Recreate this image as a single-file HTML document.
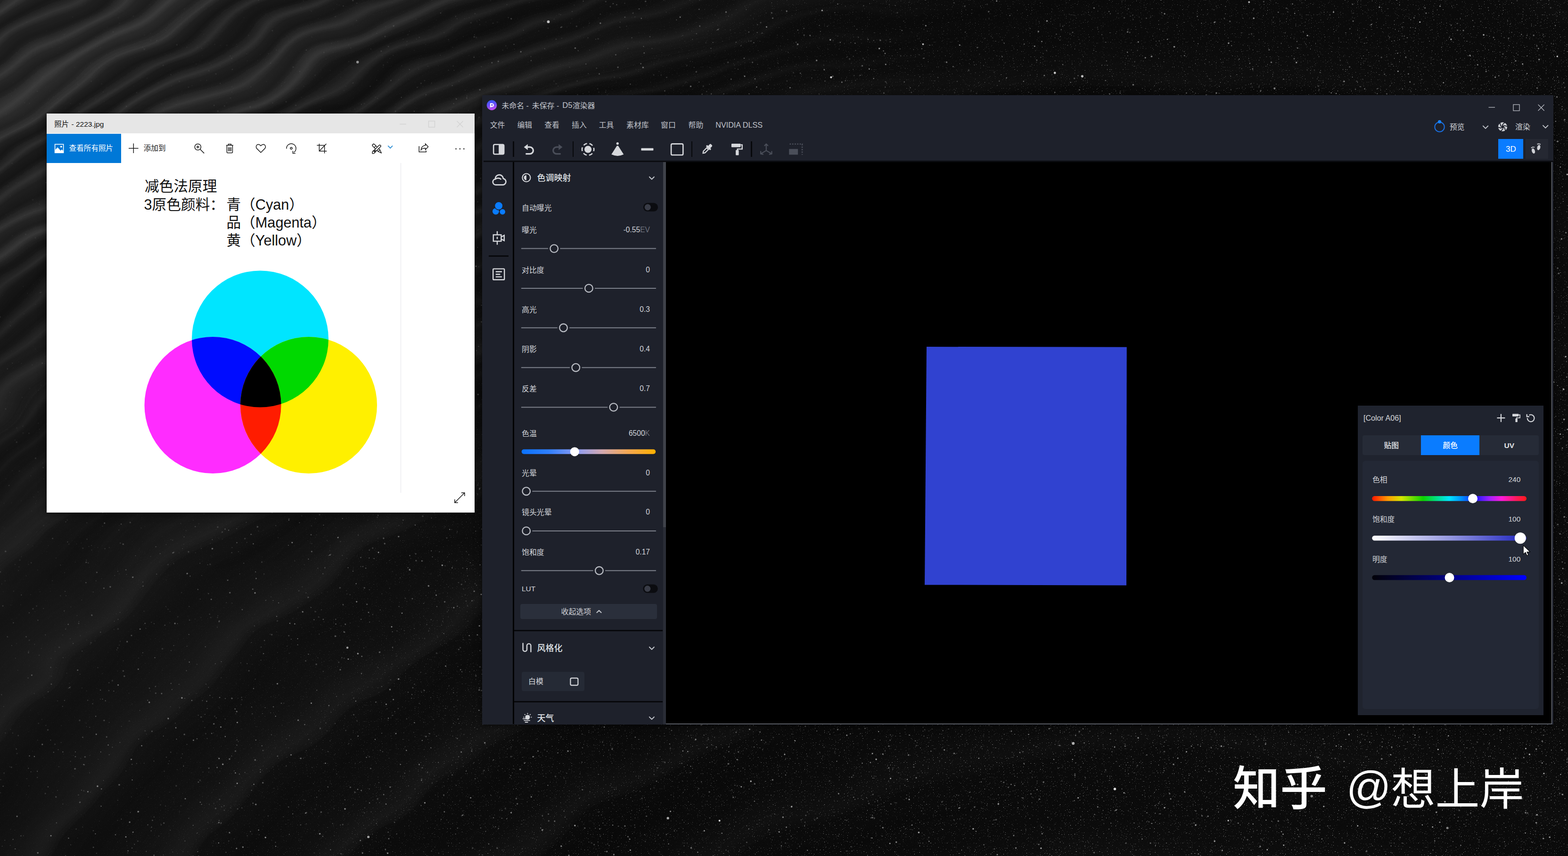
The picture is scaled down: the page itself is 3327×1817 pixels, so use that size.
<!DOCTYPE html><html><head><meta charset="utf-8"><title>D5</title><style>html,body{margin:0;padding:0;background:#111;overflow:hidden}body{width:3327px;height:1817px;position:relative;font-family:"Liberation Sans",sans-serif}#root{position:absolute;left:0;top:0;width:3327px;height:1817px;overflow:hidden}.a{position:absolute}.t{white-space:nowrap}.cj{font-family:"Liberation Sans","Noto Sans CJK SC",sans-serif}</style></head><body><div id="root">
<div class="a" style="left:0;top:0;width:3327px;height:1817px;background:radial-gradient(ellipse 1500px 950px at -100px 1350px, rgba(255,255,255,0.06), rgba(255,255,255,0) 100%),radial-gradient(ellipse 2300px 1500px at -100px 0px, #2c2c2c 0%, #222222 28%, #171717 50%, #0f0f0f 72%, #0a0a0a 100%)"></div>
<svg width="0" height="0" style="position:absolute"><filter id="wdisp" x="0" y="0" width="100%" height="100%"><feTurbulence type="fractalNoise" baseFrequency="0.0035 0.006" numOctaves="2" seed="8" result="n"/><feDisplacementMap in="SourceGraphic" in2="n" scale="80" xChannelSelector="R" yChannelSelector="G"/></filter></svg>
<div class="a" style="left:-180px;top:-180px;width:3687px;height:2177px;background:repeating-radial-gradient(circle at 2680px 3880px, rgba(255,255,255,0.045) 0px, rgba(255,255,255,0) 70px, rgba(0,0,0,0.28) 150px, rgba(0,0,0,0.1) 200px, rgba(255,255,255,0.045) 236px);-webkit-mask-image:linear-gradient(100deg, rgba(0,0,0,0.9) 0%, rgba(0,0,0,0.8) 35%, rgba(0,0,0,0.4) 60%, rgba(0,0,0,0.15) 100%);mask-image:linear-gradient(100deg, rgba(0,0,0,0.9) 0%, rgba(0,0,0,0.8) 35%, rgba(0,0,0,0.4) 60%, rgba(0,0,0,0.15) 100%);filter:url(#wdisp)"></div>
<div class="a" style="left:-180px;top:-180px;width:3687px;height:2177px;background:repeating-radial-gradient(circle at 2680px 3880px, rgba(255,255,255,0) 0px, rgba(255,255,255,0.085) 12px, rgba(255,255,255,0.02) 24px, rgba(0,0,0,0.26) 36px, rgba(0,0,0,0.1) 47px, rgba(255,255,255,0) 54px);-webkit-mask-image:radial-gradient(ellipse 2100px 1250px at 180px 180px, rgba(0,0,0,1) 0%, rgba(0,0,0,0.9) 40%, rgba(0,0,0,0.4) 70%, rgba(0,0,0,0) 100%);mask-image:radial-gradient(ellipse 2100px 1250px at 180px 180px, rgba(0,0,0,1) 0%, rgba(0,0,0,0.9) 40%, rgba(0,0,0,0.4) 70%, rgba(0,0,0,0) 100%);filter:url(#wdisp)"></div>
<svg class="a" style="left:0;top:0" width="3327" height="1817" viewBox="0 0 3327 1817">
<defs>
<filter id="grain" x="0" y="0" width="100%" height="100%"><feTurbulence type="fractalNoise" baseFrequency="0.85" numOctaves="2" seed="3"/><feColorMatrix type="matrix" values="0 0 0 0 1  0 0 0 0 1  0 0 0 0 1  1.6 0 0 0 -0.62"/></filter>
<filter id="glit" x="0" y="0" width="100%" height="100%"><feTurbulence type="fractalNoise" baseFrequency="0.55" numOctaves="1" seed="21"/><feColorMatrix type="matrix" values="0 0 0 0 1  0 0 0 0 1  0 0 0 0 1  14 0 0 0 -9.6"/></filter>
<pattern id="gl" width="500" height="500" patternUnits="userSpaceOnUse"><rect width="500" height="500" filter="url(#glit)"/></pattern>
<linearGradient id="gm" x1="0" y1="0.2" x2="1" y2="0.55"><stop offset="0" stop-color="#fff" stop-opacity="0"/><stop offset="0.3" stop-color="#fff" stop-opacity="0.12"/><stop offset="0.5" stop-color="#fff" stop-opacity="0.55"/><stop offset="0.8" stop-color="#fff" stop-opacity="0.9"/><stop offset="1" stop-color="#fff" stop-opacity="1"/></linearGradient>
<mask id="gmk"><rect width="3327" height="1817" fill="url(#gm)"/></mask>
<pattern id="gp" width="400" height="400" patternUnits="userSpaceOnUse"><rect width="400" height="400" filter="url(#grain)"/></pattern>
<linearGradient id="dm" x1="0" y1="0" x2="1" y2="0.45"><stop offset="0" stop-color="#fff" stop-opacity="0.03"/><stop offset="0.22" stop-color="#fff" stop-opacity="0.18"/><stop offset="0.42" stop-color="#fff" stop-opacity="0.7"/><stop offset="1" stop-color="#fff" stop-opacity="1"/></linearGradient>
<mask id="sm"><rect width="3327" height="1817" fill="url(#dm)"/></mask>

<pattern id="sp" width="620" height="620" patternUnits="userSpaceOnUse" patternTransform="rotate(-27)">
<circle cx="280.5" cy="347.1" r="1.1" fill="#fff" opacity="0.52"/>
<circle cx="530.1" cy="117.7" r="1.3" fill="#fff" opacity="0.53"/>
<circle cx="380.7" cy="115.4" r="1.1" fill="#fff" opacity="0.41"/>
<circle cx="56.2" cy="502" r="0.55" fill="#fff" opacity="0.62"/>
<circle cx="245.6" cy="280.9" r="1.6" fill="#fff" opacity="0.66"/>
<circle cx="386.3" cy="515.7" r="0.6" fill="#fff" opacity="0.24"/>
<circle cx="117.9" cy="150" r="0.55" fill="#fff" opacity="0.74"/>
<circle cx="202.3" cy="366.4" r="0.7" fill="#fff" opacity="0.56"/>
<circle cx="397" cy="309.9" r="0.6" fill="#fff" opacity="0.52"/>
<circle cx="172.5" cy="618.5" r="0.6" fill="#fff" opacity="0.70"/>
<circle cx="195.5" cy="142.4" r="0.8" fill="#fff" opacity="0.22"/>
<circle cx="349.1" cy="66.9" r="0.6" fill="#fff" opacity="0.79"/>
<circle cx="239.6" cy="594" r="0.55" fill="#fff" opacity="0.35"/>
<circle cx="574.8" cy="32.4" r="1.0" fill="#fff" opacity="0.89"/>
<circle cx="246.4" cy="45.3" r="0.7" fill="#fff" opacity="0.74"/>
<circle cx="167.3" cy="54" r="0.9" fill="#fff" opacity="0.21"/>
<circle cx="254.2" cy="572.2" r="0.7" fill="#fff" opacity="0.37"/>
<circle cx="62.6" cy="37.1" r="1.1" fill="#fff" opacity="0.32"/>
<circle cx="346.8" cy="277.4" r="0.7" fill="#fff" opacity="0.89"/>
<circle cx="477.1" cy="259.9" r="1.0" fill="#fff" opacity="0.28"/>
<circle cx="260.9" cy="132" r="0.8" fill="#fff" opacity="0.81"/>
<circle cx="604.4" cy="367.5" r="0.55" fill="#fff" opacity="0.35"/>
<circle cx="244.5" cy="529.7" r="1.6" fill="#fff" opacity="0.27"/>
<circle cx="613.4" cy="132.2" r="0.8" fill="#fff" opacity="0.21"/>
<circle cx="378.4" cy="514.8" r="1.0" fill="#fff" opacity="0.25"/>
<circle cx="55.9" cy="361.3" r="0.7" fill="#fff" opacity="0.21"/>
<circle cx="228.6" cy="385.7" r="0.7" fill="#fff" opacity="0.87"/>
<circle cx="299.9" cy="356.2" r="1.0" fill="#fff" opacity="0.33"/>
<circle cx="95.6" cy="563.2" r="1.6" fill="#fff" opacity="0.37"/>
<circle cx="117.7" cy="458.4" r="1.3" fill="#fff" opacity="0.34"/>
<circle cx="589.1" cy="547" r="1.6" fill="#fff" opacity="0.25"/>
<circle cx="29.4" cy="67.6" r="1.3" fill="#fff" opacity="0.87"/>
<circle cx="147.8" cy="436.8" r="0.8" fill="#fff" opacity="0.49"/>
<circle cx="561" cy="304.4" r="1.3" fill="#fff" opacity="0.32"/>
<circle cx="446.6" cy="42.6" r="0.7" fill="#fff" opacity="0.54"/>
<circle cx="405.2" cy="381.8" r="0.6" fill="#fff" opacity="0.40"/>
<circle cx="568.8" cy="126.5" r="0.55" fill="#fff" opacity="0.25"/>
<circle cx="255.1" cy="154.4" r="0.55" fill="#fff" opacity="0.32"/>
<circle cx="228.6" cy="354.7" r="0.7" fill="#fff" opacity="0.26"/>
<circle cx="85.8" cy="279.2" r="0.9" fill="#fff" opacity="0.66"/>
<circle cx="428.6" cy="362.4" r="0.7" fill="#fff" opacity="0.61"/>
<circle cx="572.6" cy="294.4" r="0.9" fill="#fff" opacity="0.69"/>
<circle cx="596.9" cy="13.2" r="0.6" fill="#fff" opacity="0.54"/>
<circle cx="452.9" cy="197.7" r="0.6" fill="#fff" opacity="0.25"/>
<circle cx="338.6" cy="456.9" r="0.7" fill="#fff" opacity="0.76"/>
<circle cx="567.3" cy="218.1" r="1.1" fill="#fff" opacity="0.83"/>
<circle cx="540.1" cy="258.6" r="0.55" fill="#fff" opacity="0.80"/>
<circle cx="355.1" cy="387.5" r="1.0" fill="#fff" opacity="0.47"/>
<circle cx="7.7" cy="44.8" r="0.6" fill="#fff" opacity="0.65"/>
<circle cx="615.9" cy="545.5" r="0.9" fill="#fff" opacity="0.47"/>
<circle cx="455.7" cy="360.2" r="1.1" fill="#fff" opacity="0.52"/>
<circle cx="335.6" cy="321.6" r="1.3" fill="#fff" opacity="0.22"/>
<circle cx="372.8" cy="298.2" r="0.7" fill="#fff" opacity="0.87"/>
<circle cx="70" cy="483.6" r="1.1" fill="#fff" opacity="0.38"/>
<circle cx="7" cy="186.6" r="1.6" fill="#fff" opacity="0.34"/>
<circle cx="105.2" cy="561.5" r="1.1" fill="#fff" opacity="0.55"/>
<circle cx="149.7" cy="250.9" r="0.8" fill="#fff" opacity="0.34"/>
<circle cx="267.2" cy="499.7" r="0.7" fill="#fff" opacity="0.82"/>
<circle cx="238.3" cy="361.5" r="0.9" fill="#fff" opacity="0.35"/>
<circle cx="83.4" cy="217.5" r="0.55" fill="#fff" opacity="0.70"/>
<circle cx="589" cy="171.6" r="0.7" fill="#fff" opacity="0.28"/>
<circle cx="292.2" cy="574" r="1.0" fill="#fff" opacity="0.47"/>
<circle cx="322.4" cy="416.7" r="1.6" fill="#fff" opacity="0.52"/>
<circle cx="46.3" cy="19.5" r="1.6" fill="#fff" opacity="0.23"/>
<circle cx="439.4" cy="353.8" r="0.8" fill="#fff" opacity="0.65"/>
<circle cx="349.7" cy="397.4" r="1.0" fill="#fff" opacity="0.52"/>
<circle cx="15.3" cy="514.4" r="0.7" fill="#fff" opacity="0.75"/>
<circle cx="494" cy="610.1" r="0.6" fill="#fff" opacity="0.51"/>
<circle cx="390.6" cy="406.1" r="0.9" fill="#fff" opacity="0.87"/>
<circle cx="424.4" cy="123.6" r="1.1" fill="#fff" opacity="0.38"/>
<circle cx="442.8" cy="468.1" r="1.3" fill="#fff" opacity="0.70"/>
<circle cx="111" cy="168.9" r="0.9" fill="#fff" opacity="0.58"/>
<circle cx="587" cy="310.3" r="0.7" fill="#fff" opacity="0.48"/>
<circle cx="491" cy="561.9" r="0.6" fill="#fff" opacity="0.49"/>
<circle cx="553.4" cy="240.5" r="1.1" fill="#fff" opacity="0.52"/>
<circle cx="387.8" cy="564.2" r="1.0" fill="#fff" opacity="0.59"/>
<circle cx="404.7" cy="311.6" r="0.9" fill="#fff" opacity="0.52"/>
<circle cx="403.8" cy="127" r="0.6" fill="#fff" opacity="0.35"/>
<circle cx="558" cy="607.9" r="0.8" fill="#fff" opacity="0.58"/>
<circle cx="490.3" cy="198.6" r="0.55" fill="#fff" opacity="0.44"/>
<circle cx="51.3" cy="273.4" r="1.3" fill="#fff" opacity="0.49"/>
<circle cx="170.7" cy="570.3" r="0.7" fill="#fff" opacity="0.77"/>
<circle cx="39.7" cy="495.9" r="0.7" fill="#fff" opacity="0.57"/>
<circle cx="425.7" cy="567.9" r="1.1" fill="#fff" opacity="0.30"/>
<circle cx="320.2" cy="448.6" r="1.1" fill="#fff" opacity="0.86"/>
<circle cx="305.4" cy="588.5" r="0.6" fill="#fff" opacity="0.73"/>
<circle cx="272.4" cy="346.4" r="1.3" fill="#fff" opacity="0.65"/>
<circle cx="324.1" cy="523" r="1.3" fill="#fff" opacity="0.38"/>
<circle cx="416.2" cy="592" r="1.6" fill="#fff" opacity="0.35"/>
<circle cx="527.5" cy="600.4" r="1.3" fill="#fff" opacity="0.39"/>
<circle cx="308.5" cy="254.9" r="0.6" fill="#fff" opacity="0.55"/>
<circle cx="375.2" cy="17.2" r="0.55" fill="#fff" opacity="0.56"/>
<circle cx="248.4" cy="496.7" r="1.6" fill="#fff" opacity="0.29"/>
<circle cx="57.8" cy="103.4" r="1.3" fill="#fff" opacity="0.52"/>
<circle cx="570.9" cy="496.2" r="1.0" fill="#fff" opacity="0.39"/>
<circle cx="293.4" cy="78.7" r="1.0" fill="#fff" opacity="0.83"/>
<circle cx="580.1" cy="570.4" r="1.3" fill="#fff" opacity="0.42"/>
<circle cx="118.7" cy="383.1" r="0.8" fill="#fff" opacity="0.29"/>
<circle cx="483.2" cy="14.1" r="0.7" fill="#fff" opacity="0.31"/>
<circle cx="7.3" cy="176.1" r="0.9" fill="#fff" opacity="0.37"/>
<circle cx="309.3" cy="309.8" r="1.6" fill="#fff" opacity="0.29"/>
<circle cx="316.5" cy="155.3" r="0.7" fill="#fff" opacity="0.69"/>
<circle cx="544.8" cy="14.4" r="1.0" fill="#fff" opacity="0.78"/>
<circle cx="381.8" cy="333.7" r="1.3" fill="#fff" opacity="0.65"/>
<circle cx="328.4" cy="527.8" r="1.6" fill="#fff" opacity="0.61"/>
<circle cx="84.6" cy="567.2" r="0.9" fill="#fff" opacity="0.83"/>
<circle cx="195.8" cy="195.3" r="0.7" fill="#fff" opacity="0.35"/>
<circle cx="619" cy="550.3" r="0.7" fill="#fff" opacity="0.82"/>
<circle cx="82.2" cy="54.6" r="1.0" fill="#fff" opacity="0.27"/>
<circle cx="515.9" cy="261.4" r="0.7" fill="#fff" opacity="0.34"/>
<circle cx="389.4" cy="495.3" r="0.6" fill="#fff" opacity="0.34"/>
<circle cx="423.1" cy="565.1" r="0.9" fill="#fff" opacity="0.28"/>
<circle cx="313.5" cy="470.1" r="1.3" fill="#fff" opacity="0.90"/>
<circle cx="516.4" cy="497.8" r="1.1" fill="#fff" opacity="0.27"/>
<circle cx="23.2" cy="342" r="1.3" fill="#fff" opacity="0.83"/>
<circle cx="298.4" cy="117.5" r="0.6" fill="#fff" opacity="0.34"/>
<circle cx="520.9" cy="614" r="0.6" fill="#fff" opacity="0.61"/>
<circle cx="83.4" cy="422.2" r="0.6" fill="#fff" opacity="0.74"/>
<circle cx="202.6" cy="289.5" r="1.3" fill="#fff" opacity="0.45"/>
<circle cx="130.3" cy="231.4" r="0.55" fill="#fff" opacity="0.79"/>
<circle cx="112.4" cy="281.4" r="0.9" fill="#fff" opacity="0.48"/>
<circle cx="121" cy="102.3" r="1.3" fill="#fff" opacity="0.75"/>
<circle cx="200.7" cy="52.6" r="1.0" fill="#fff" opacity="0.60"/>
<circle cx="118.4" cy="362.5" r="0.9" fill="#fff" opacity="0.76"/>
<circle cx="160.1" cy="565" r="0.7" fill="#fff" opacity="0.77"/>
<circle cx="251.5" cy="555.9" r="1.3" fill="#fff" opacity="0.69"/>
<circle cx="475.7" cy="474.4" r="1.0" fill="#fff" opacity="0.34"/>
<circle cx="114.6" cy="494.3" r="0.8" fill="#fff" opacity="0.53"/>
<circle cx="6.6" cy="220.5" r="1.6" fill="#fff" opacity="0.23"/>
<circle cx="169.2" cy="596.1" r="0.8" fill="#fff" opacity="0.44"/>
<circle cx="409.1" cy="353.1" r="1.3" fill="#fff" opacity="0.25"/>
<circle cx="319.1" cy="308.5" r="0.7" fill="#fff" opacity="0.69"/>
<circle cx="472.3" cy="607.7" r="0.55" fill="#fff" opacity="0.28"/>
<circle cx="67" cy="147" r="1.1" fill="#fff" opacity="0.48"/>
<circle cx="31.3" cy="121.2" r="1.0" fill="#fff" opacity="0.21"/>
<circle cx="160.3" cy="170.9" r="0.9" fill="#fff" opacity="0.59"/>
<circle cx="314.8" cy="599.6" r="1.6" fill="#fff" opacity="0.79"/>
<circle cx="61.8" cy="275.5" r="0.6" fill="#fff" opacity="0.58"/>
<circle cx="414.4" cy="592.3" r="1.0" fill="#fff" opacity="0.85"/>
<circle cx="99.2" cy="292.5" r="0.7" fill="#fff" opacity="0.80"/>
<circle cx="336" cy="369.9" r="1.0" fill="#fff" opacity="0.86"/>
<circle cx="260.8" cy="326.6" r="1.6" fill="#fff" opacity="0.42"/>
<circle cx="328.9" cy="299.6" r="0.8" fill="#fff" opacity="0.59"/>
<circle cx="175.8" cy="444.3" r="0.8" fill="#fff" opacity="0.22"/>
<circle cx="478.9" cy="363.2" r="0.7" fill="#fff" opacity="0.49"/>
<circle cx="424.3" cy="32.7" r="0.9" fill="#fff" opacity="0.72"/>
<circle cx="31.1" cy="613" r="0.9" fill="#fff" opacity="0.25"/>
<circle cx="561.4" cy="266.3" r="1.1" fill="#fff" opacity="0.38"/>
<circle cx="468.4" cy="28.2" r="0.6" fill="#fff" opacity="0.86"/>
<circle cx="448.1" cy="290.4" r="0.7" fill="#fff" opacity="0.62"/>
<circle cx="71.4" cy="387" r="1.1" fill="#fff" opacity="0.28"/>
<circle cx="533.9" cy="221.2" r="0.7" fill="#fff" opacity="0.29"/>
<circle cx="274.6" cy="414.1" r="1.1" fill="#fff" opacity="0.62"/>
<circle cx="396.5" cy="422.8" r="0.9" fill="#fff" opacity="0.74"/>
<circle cx="329.1" cy="618.5" r="0.8" fill="#fff" opacity="0.71"/>
<circle cx="147.8" cy="70.6" r="0.8" fill="#fff" opacity="0.75"/>
<circle cx="387.5" cy="222.7" r="0.8" fill="#fff" opacity="0.63"/>
<circle cx="449.5" cy="433.4" r="0.7" fill="#fff" opacity="0.64"/>
<circle cx="467.1" cy="117.7" r="0.7" fill="#fff" opacity="0.55"/>
<circle cx="404.8" cy="121.5" r="0.55" fill="#fff" opacity="0.64"/>
<circle cx="5.9" cy="160.9" r="0.55" fill="#fff" opacity="0.64"/>
<circle cx="63.5" cy="335.8" r="0.6" fill="#fff" opacity="0.73"/>
<circle cx="566" cy="99.7" r="0.7" fill="#fff" opacity="0.64"/>
<circle cx="231.4" cy="296.7" r="0.7" fill="#fff" opacity="0.44"/>
<circle cx="306.5" cy="82.7" r="0.6" fill="#fff" opacity="0.76"/>
<circle cx="277.3" cy="509.7" r="0.7" fill="#fff" opacity="0.51"/>
<circle cx="463.3" cy="241.9" r="0.7" fill="#fff" opacity="0.46"/>
<circle cx="405.3" cy="613.3" r="0.9" fill="#fff" opacity="0.40"/>
<circle cx="470.6" cy="512.2" r="0.7" fill="#fff" opacity="0.50"/>
<circle cx="228.9" cy="60.2" r="0.9" fill="#fff" opacity="0.25"/>
<circle cx="51.5" cy="349.8" r="1.1" fill="#fff" opacity="0.77"/>
<circle cx="287.4" cy="510.6" r="0.55" fill="#fff" opacity="0.25"/>
<circle cx="132.2" cy="410.5" r="0.6" fill="#fff" opacity="0.69"/>
<circle cx="306.8" cy="473.8" r="0.9" fill="#fff" opacity="0.40"/>
<circle cx="88.6" cy="221.8" r="0.9" fill="#fff" opacity="0.46"/>
<circle cx="72.8" cy="439.8" r="1.6" fill="#fff" opacity="0.62"/>
<circle cx="559.5" cy="426" r="0.8" fill="#fff" opacity="0.51"/>
<circle cx="497.9" cy="189" r="0.9" fill="#fff" opacity="0.35"/>
<circle cx="600" cy="452.5" r="1.3" fill="#fff" opacity="0.37"/>
<circle cx="224.3" cy="226.6" r="0.9" fill="#fff" opacity="0.67"/>
<circle cx="362.6" cy="493.6" r="1.6" fill="#fff" opacity="0.46"/>
<circle cx="242" cy="96" r="1.6" fill="#fff" opacity="0.59"/>
<circle cx="109.5" cy="470.5" r="0.8" fill="#fff" opacity="0.77"/>
<circle cx="137.2" cy="35.8" r="0.7" fill="#fff" opacity="0.60"/>
<circle cx="599.2" cy="403.7" r="1.0" fill="#fff" opacity="0.24"/>
<circle cx="339" cy="488.6" r="0.6" fill="#fff" opacity="0.43"/>
<circle cx="169.7" cy="65.4" r="0.9" fill="#fff" opacity="0.26"/>
<circle cx="393.2" cy="89.2" r="1.0" fill="#fff" opacity="0.37"/>
<circle cx="136.7" cy="474.5" r="1.3" fill="#fff" opacity="0.44"/>
<circle cx="284.6" cy="217.3" r="0.9" fill="#fff" opacity="0.67"/>
<circle cx="306.1" cy="333.2" r="0.6" fill="#fff" opacity="0.70"/>
<circle cx="567.3" cy="254.6" r="0.9" fill="#fff" opacity="0.80"/>
<circle cx="499.7" cy="517" r="1.1" fill="#fff" opacity="0.87"/>
<circle cx="397" cy="324.8" r="0.55" fill="#fff" opacity="0.76"/>
<circle cx="261.4" cy="260.7" r="0.7" fill="#fff" opacity="0.37"/>
<circle cx="100.6" cy="393.8" r="0.7" fill="#fff" opacity="0.42"/>
<circle cx="241.4" cy="328" r="0.8" fill="#fff" opacity="0.88"/>
<circle cx="36.7" cy="191.2" r="0.6" fill="#fff" opacity="0.41"/>
<circle cx="96.4" cy="570.2" r="0.55" fill="#fff" opacity="0.73"/>
<circle cx="10.6" cy="298.3" r="0.55" fill="#fff" opacity="0.42"/>
<circle cx="122.5" cy="222.8" r="1.6" fill="#fff" opacity="0.36"/>
<circle cx="444.7" cy="368.8" r="0.7" fill="#fff" opacity="0.51"/>
<circle cx="554.6" cy="249.5" r="0.8" fill="#fff" opacity="0.64"/>
<circle cx="584" cy="341.3" r="0.8" fill="#fff" opacity="0.54"/>
<circle cx="249.6" cy="592.5" r="1.3" fill="#fff" opacity="0.74"/>
<circle cx="57.3" cy="534.8" r="1.0" fill="#fff" opacity="0.23"/>
<circle cx="587.5" cy="496.9" r="1.0" fill="#fff" opacity="0.88"/>
<circle cx="492.7" cy="480" r="0.55" fill="#fff" opacity="0.66"/>
<circle cx="147.3" cy="6.7" r="1.1" fill="#fff" opacity="0.83"/>
<circle cx="279" cy="152.9" r="1.0" fill="#fff" opacity="0.62"/>
<circle cx="97.5" cy="97.3" r="0.9" fill="#fff" opacity="0.30"/>
<circle cx="563" cy="502.2" r="0.7" fill="#fff" opacity="0.65"/>
<circle cx="615.7" cy="165.2" r="1.3" fill="#fff" opacity="0.24"/>
<circle cx="354.6" cy="110.5" r="0.7" fill="#fff" opacity="0.77"/>
<circle cx="524.6" cy="509.7" r="0.6" fill="#fff" opacity="0.45"/>
<circle cx="381.2" cy="327.3" r="1.1" fill="#fff" opacity="0.69"/>
<circle cx="51.4" cy="464.1" r="1.3" fill="#fff" opacity="0.80"/>
<circle cx="188.2" cy="489.4" r="1.0" fill="#fff" opacity="0.34"/>
<circle cx="423" cy="484.5" r="1.1" fill="#fff" opacity="0.35"/>
<circle cx="336.9" cy="325.9" r="0.7" fill="#fff" opacity="0.86"/>
<circle cx="597.6" cy="196" r="1.0" fill="#fff" opacity="0.25"/>
<circle cx="189.5" cy="289.7" r="0.6" fill="#fff" opacity="0.45"/>
<circle cx="426" cy="65.6" r="1.0" fill="#fff" opacity="0.67"/>
<circle cx="462.9" cy="486.3" r="0.6" fill="#fff" opacity="0.66"/>
<circle cx="7.7" cy="233.8" r="1.1" fill="#fff" opacity="0.37"/>
<circle cx="349.8" cy="284" r="0.55" fill="#fff" opacity="0.80"/>
<circle cx="523.6" cy="445.9" r="1.6" fill="#fff" opacity="0.31"/>
<circle cx="389.2" cy="581.2" r="0.8" fill="#fff" opacity="0.87"/>
<circle cx="468.1" cy="344.5" r="0.6" fill="#fff" opacity="0.38"/>
<circle cx="124" cy="453.5" r="0.9" fill="#fff" opacity="0.42"/>
<circle cx="169.8" cy="291.3" r="0.9" fill="#fff" opacity="0.51"/>
<circle cx="237.1" cy="63.2" r="1.6" fill="#fff" opacity="0.27"/>
<circle cx="420.2" cy="439.1" r="0.7" fill="#fff" opacity="0.34"/>
<circle cx="22.6" cy="287.2" r="0.6" fill="#fff" opacity="0.27"/>
<circle cx="20.1" cy="612.2" r="1.0" fill="#fff" opacity="0.48"/>
<circle cx="45.1" cy="570.8" r="1.0" fill="#fff" opacity="0.85"/>
<circle cx="86.2" cy="127.4" r="0.7" fill="#fff" opacity="0.77"/>
<circle cx="239.3" cy="205.5" r="1.0" fill="#fff" opacity="0.64"/>
<circle cx="450.7" cy="380.1" r="0.9" fill="#fff" opacity="0.89"/>
<circle cx="489.6" cy="409.3" r="1.6" fill="#fff" opacity="0.57"/>
<circle cx="161.6" cy="117" r="0.8" fill="#fff" opacity="0.66"/>
<circle cx="65.9" cy="234.1" r="1.3" fill="#fff" opacity="0.43"/>
<circle cx="182" cy="63.7" r="0.7" fill="#fff" opacity="0.38"/>
<circle cx="334.1" cy="185.1" r="0.7" fill="#fff" opacity="0.45"/>
<circle cx="310.3" cy="87.9" r="0.7" fill="#fff" opacity="0.89"/>
<circle cx="319.9" cy="443.5" r="0.7" fill="#fff" opacity="0.60"/>
<circle cx="16.6" cy="408.9" r="0.6" fill="#fff" opacity="0.30"/>
<circle cx="296.3" cy="258.8" r="0.9" fill="#fff" opacity="0.43"/>
<circle cx="576" cy="223.9" r="1.1" fill="#fff" opacity="0.82"/>
<circle cx="280.4" cy="452.5" r="0.7" fill="#fff" opacity="0.83"/>
<circle cx="336.9" cy="347.7" r="1.3" fill="#fff" opacity="0.84"/>
<circle cx="104.5" cy="462.3" r="0.9" fill="#fff" opacity="0.62"/>
<circle cx="76" cy="511.3" r="0.8" fill="#fff" opacity="0.68"/>
<circle cx="225.5" cy="470.2" r="0.9" fill="#fff" opacity="0.78"/>
<circle cx="115.1" cy="339.7" r="0.6" fill="#fff" opacity="0.52"/>
<circle cx="250.1" cy="485.3" r="0.7" fill="#fff" opacity="0.42"/>
<circle cx="416.2" cy="457.4" r="1.0" fill="#fff" opacity="0.63"/>
<circle cx="397" cy="473.3" r="0.7" fill="#fff" opacity="0.34"/>
<circle cx="290.2" cy="88.7" r="1.0" fill="#fff" opacity="0.28"/>
<circle cx="251.6" cy="208.5" r="0.7" fill="#fff" opacity="0.38"/>
<circle cx="352.2" cy="205.9" r="0.55" fill="#fff" opacity="0.71"/>
<circle cx="488.3" cy="250" r="1.1" fill="#fff" opacity="0.62"/>
<circle cx="291.3" cy="255.1" r="1.6" fill="#fff" opacity="0.84"/>
<circle cx="350.2" cy="252.3" r="0.8" fill="#fff" opacity="0.54"/>
<circle cx="616.7" cy="519.7" r="1.0" fill="#fff" opacity="0.78"/>
<circle cx="72.8" cy="71.1" r="1.3" fill="#fff" opacity="0.43"/>
<circle cx="322.8" cy="260.6" r="0.55" fill="#fff" opacity="0.42"/>
<circle cx="33.9" cy="449.9" r="1.0" fill="#fff" opacity="0.71"/>
<circle cx="370.5" cy="466.2" r="0.8" fill="#fff" opacity="0.82"/>
<circle cx="543.8" cy="151.5" r="1.1" fill="#fff" opacity="0.37"/>
<circle cx="541.3" cy="603" r="1.1" fill="#fff" opacity="0.69"/>
<circle cx="326.3" cy="148.3" r="0.8" fill="#fff" opacity="0.66"/>
<circle cx="582.9" cy="545.4" r="0.9" fill="#fff" opacity="0.81"/>
<circle cx="261.3" cy="499.3" r="0.7" fill="#fff" opacity="0.65"/>
<circle cx="261.4" cy="76.1" r="0.6" fill="#fff" opacity="0.27"/>
<circle cx="491.3" cy="76.8" r="1.3" fill="#fff" opacity="0.60"/>
<circle cx="281" cy="183.6" r="0.8" fill="#fff" opacity="0.22"/>
<circle cx="106.6" cy="273.3" r="1.1" fill="#fff" opacity="0.77"/>
<circle cx="246.3" cy="221" r="1.6" fill="#fff" opacity="0.36"/>
<circle cx="189.9" cy="282" r="0.9" fill="#fff" opacity="0.42"/>
<circle cx="309" cy="579" r="1.1" fill="#fff" opacity="0.82"/>
<circle cx="125.7" cy="532.6" r="0.55" fill="#fff" opacity="0.34"/>
<circle cx="519.5" cy="219.6" r="1.1" fill="#fff" opacity="0.21"/>
<circle cx="393.9" cy="432.7" r="1.3" fill="#fff" opacity="0.34"/>
<circle cx="392.1" cy="118.7" r="0.55" fill="#fff" opacity="0.66"/>
<circle cx="189.8" cy="507" r="0.8" fill="#fff" opacity="0.81"/>
<circle cx="442.1" cy="83.6" r="1.1" fill="#fff" opacity="0.49"/>
<circle cx="105" cy="534.2" r="0.6" fill="#fff" opacity="0.70"/>
<circle cx="121.8" cy="112.2" r="0.7" fill="#fff" opacity="0.55"/>
<circle cx="183.2" cy="169.4" r="1.3" fill="#fff" opacity="0.82"/>
<circle cx="365.7" cy="142" r="0.8" fill="#fff" opacity="0.83"/>
<circle cx="111.9" cy="140.1" r="0.7" fill="#fff" opacity="0.65"/>
<circle cx="55.8" cy="609.5" r="1.1" fill="#fff" opacity="0.84"/>
<circle cx="45.8" cy="562.6" r="0.55" fill="#fff" opacity="0.62"/>
<circle cx="176.4" cy="155.6" r="1.6" fill="#fff" opacity="0.26"/>
<circle cx="176.8" cy="468.5" r="0.7" fill="#fff" opacity="0.33"/>
<circle cx="455.2" cy="17.9" r="0.7" fill="#fff" opacity="0.89"/>
<circle cx="20.8" cy="286.2" r="1.6" fill="#fff" opacity="0.47"/>
<circle cx="576.1" cy="309.9" r="0.7" fill="#fff" opacity="0.24"/>
<circle cx="481.6" cy="564" r="0.9" fill="#fff" opacity="0.66"/>
<circle cx="485.5" cy="320.4" r="1.3" fill="#fff" opacity="0.78"/>
<circle cx="393.5" cy="609.7" r="1.3" fill="#fff" opacity="0.32"/>
<circle cx="483.4" cy="102.4" r="1.6" fill="#fff" opacity="0.50"/>
<circle cx="414.4" cy="339.6" r="0.8" fill="#fff" opacity="0.75"/>
<circle cx="490.5" cy="146.3" r="1.1" fill="#fff" opacity="0.58"/>
<circle cx="528.6" cy="374" r="0.8" fill="#fff" opacity="0.22"/>
<circle cx="370" cy="443.1" r="1.6" fill="#fff" opacity="0.51"/>
<circle cx="546" cy="201.5" r="1.6" fill="#fff" opacity="0.21"/>
<circle cx="307.6" cy="269.5" r="1.1" fill="#fff" opacity="0.71"/>
<circle cx="531.1" cy="19.2" r="0.6" fill="#fff" opacity="0.84"/>
<circle cx="352.7" cy="336.8" r="0.7" fill="#fff" opacity="0.64"/>
<circle cx="33.5" cy="263.7" r="0.9" fill="#fff" opacity="0.77"/>
<circle cx="457.8" cy="484" r="1.6" fill="#fff" opacity="0.55"/>
<circle cx="403" cy="316.5" r="1.0" fill="#fff" opacity="0.38"/>
<circle cx="99.1" cy="428.2" r="1.6" fill="#fff" opacity="0.75"/>
<circle cx="37.9" cy="254.6" r="0.9" fill="#fff" opacity="0.69"/>
<circle cx="436.3" cy="593.5" r="0.7" fill="#fff" opacity="0.54"/>
<circle cx="472" cy="611.4" r="0.7" fill="#fff" opacity="0.72"/>
<circle cx="323.4" cy="611.1" r="0.55" fill="#fff" opacity="0.37"/>
<circle cx="551.9" cy="87.8" r="1.0" fill="#fff" opacity="0.59"/>
<circle cx="292.6" cy="580.1" r="0.55" fill="#fff" opacity="0.68"/>
<circle cx="444.6" cy="605.2" r="1.6" fill="#fff" opacity="0.36"/>
<circle cx="157" cy="342.2" r="0.7" fill="#fff" opacity="0.49"/>
<circle cx="53.3" cy="140.9" r="0.8" fill="#fff" opacity="0.44"/>
<circle cx="608.4" cy="378.8" r="0.55" fill="#fff" opacity="0.31"/>
<circle cx="362.8" cy="616.7" r="0.9" fill="#fff" opacity="0.60"/>
<circle cx="565.4" cy="548.3" r="0.7" fill="#fff" opacity="0.52"/>
<circle cx="243.6" cy="522.7" r="1.0" fill="#fff" opacity="0.47"/>
<circle cx="30.5" cy="259.4" r="0.7" fill="#fff" opacity="0.33"/>
<circle cx="340.7" cy="101.6" r="0.7" fill="#fff" opacity="0.48"/>
<circle cx="368.2" cy="471" r="1.1" fill="#fff" opacity="0.51"/>
<circle cx="615.9" cy="421.1" r="1.1" fill="#fff" opacity="0.34"/>
<circle cx="237.4" cy="45.1" r="0.8" fill="#fff" opacity="0.45"/>
<circle cx="170.2" cy="11.5" r="0.7" fill="#fff" opacity="0.72"/>
<circle cx="317.5" cy="351.8" r="0.7" fill="#fff" opacity="0.39"/>
<circle cx="223.9" cy="95.2" r="0.9" fill="#fff" opacity="0.30"/>
<circle cx="149.3" cy="520.4" r="0.6" fill="#fff" opacity="0.21"/>
<circle cx="199.7" cy="238.3" r="0.6" fill="#fff" opacity="0.80"/>
<circle cx="236.5" cy="158.9" r="1.3" fill="#fff" opacity="0.67"/>
<circle cx="187.4" cy="376.9" r="1.1" fill="#fff" opacity="0.23"/>
<circle cx="93.5" cy="369.1" r="0.55" fill="#fff" opacity="0.35"/>
<circle cx="254.6" cy="296.7" r="0.7" fill="#fff" opacity="0.56"/>
<circle cx="339.9" cy="194.6" r="1.1" fill="#fff" opacity="0.67"/>
<circle cx="91.3" cy="127" r="0.8" fill="#fff" opacity="0.57"/>
<circle cx="278.6" cy="84.7" r="1.3" fill="#fff" opacity="0.81"/>
<circle cx="140.1" cy="181.1" r="0.9" fill="#fff" opacity="0.63"/>
<circle cx="87" cy="525.9" r="1.1" fill="#fff" opacity="0.60"/>
<circle cx="501.4" cy="604.9" r="0.8" fill="#fff" opacity="0.66"/>
<circle cx="41.5" cy="528.8" r="1.3" fill="#fff" opacity="0.68"/>
<circle cx="413.3" cy="592.2" r="0.9" fill="#fff" opacity="0.36"/>
<circle cx="392.2" cy="55.7" r="1.0" fill="#fff" opacity="0.28"/>
<circle cx="305.6" cy="303.7" r="0.9" fill="#fff" opacity="0.40"/>
<circle cx="436.1" cy="137.4" r="1.0" fill="#fff" opacity="0.34"/>
<circle cx="476.3" cy="217.4" r="0.7" fill="#fff" opacity="0.56"/>
<circle cx="460.5" cy="562.7" r="0.7" fill="#fff" opacity="0.53"/>
<circle cx="159.3" cy="528.8" r="0.8" fill="#fff" opacity="0.69"/>
<circle cx="14.3" cy="242.7" r="0.9" fill="#fff" opacity="0.84"/>
<circle cx="565.7" cy="168.6" r="1.0" fill="#fff" opacity="0.55"/>
<circle cx="363.2" cy="290.7" r="0.9" fill="#fff" opacity="0.82"/>
<circle cx="44.8" cy="21.9" r="0.9" fill="#fff" opacity="0.82"/>
<circle cx="350.7" cy="162.4" r="0.7" fill="#fff" opacity="0.65"/>
<circle cx="238.3" cy="211.7" r="0.9" fill="#fff" opacity="0.22"/>
<circle cx="438.5" cy="134.3" r="0.6" fill="#fff" opacity="0.64"/>
<circle cx="384.9" cy="254.8" r="1.0" fill="#fff" opacity="0.24"/>
<circle cx="42.4" cy="287.7" r="1.1" fill="#fff" opacity="0.47"/>
<circle cx="564" cy="23.6" r="0.7" fill="#fff" opacity="0.68"/>
<circle cx="169.2" cy="306.9" r="1.1" fill="#fff" opacity="0.88"/>
<circle cx="92.9" cy="119.3" r="0.7" fill="#fff" opacity="0.38"/>
<circle cx="136.4" cy="322.8" r="1.3" fill="#fff" opacity="0.89"/>
<circle cx="2.2" cy="339.1" r="1.3" fill="#fff" opacity="0.26"/>
<circle cx="510.6" cy="548.2" r="0.9" fill="#fff" opacity="0.38"/>
<circle cx="64.4" cy="12" r="0.7" fill="#fff" opacity="0.69"/>
<circle cx="425.7" cy="597.6" r="0.7" fill="#fff" opacity="0.31"/>
<circle cx="385.4" cy="304.2" r="1.6" fill="#fff" opacity="0.41"/>
<circle cx="257.2" cy="227.4" r="1.3" fill="#fff" opacity="0.55"/>
<circle cx="400.7" cy="224.6" r="0.7" fill="#fff" opacity="0.84"/>
<circle cx="457.3" cy="544" r="0.6" fill="#fff" opacity="0.77"/>
<circle cx="549.1" cy="192.3" r="1.1" fill="#fff" opacity="0.56"/>
<circle cx="421.1" cy="25" r="1.6" fill="#fff" opacity="0.81"/>
<circle cx="539.3" cy="33.1" r="0.8" fill="#fff" opacity="0.48"/>
<circle cx="458.5" cy="430.2" r="0.8" fill="#fff" opacity="0.70"/>
<circle cx="156.1" cy="443.8" r="0.9" fill="#fff" opacity="0.33"/>
<circle cx="530.7" cy="127" r="1.6" fill="#fff" opacity="0.78"/>
<circle cx="351.8" cy="260.8" r="0.7" fill="#fff" opacity="0.64"/>
<circle cx="515.2" cy="496.8" r="0.7" fill="#fff" opacity="0.34"/>
<circle cx="385.1" cy="181" r="0.7" fill="#fff" opacity="0.88"/>
<circle cx="292.5" cy="430.2" r="0.7" fill="#fff" opacity="0.39"/>
<circle cx="168.1" cy="156.2" r="1.0" fill="#fff" opacity="0.47"/>
<circle cx="421.2" cy="86" r="0.7" fill="#fff" opacity="0.70"/>
<circle cx="73.4" cy="26.3" r="0.8" fill="#fff" opacity="0.45"/>
<circle cx="333.9" cy="497" r="1.0" fill="#fff" opacity="0.43"/>
<circle cx="16.4" cy="336.4" r="1.1" fill="#fff" opacity="0.32"/>
<circle cx="41.8" cy="272" r="0.8" fill="#fff" opacity="0.36"/>
<circle cx="447.6" cy="253.1" r="0.7" fill="#fff" opacity="0.89"/>
<circle cx="241.4" cy="430.3" r="1.3" fill="#fff" opacity="0.40"/>
<circle cx="537.3" cy="274.2" r="0.6" fill="#fff" opacity="0.59"/>
<circle cx="555.9" cy="545.9" r="1.0" fill="#fff" opacity="0.28"/>
<circle cx="200.7" cy="11.9" r="1.6" fill="#fff" opacity="0.60"/>
<circle cx="169.7" cy="248.1" r="0.9" fill="#fff" opacity="0.36"/>
<circle cx="299" cy="226.8" r="0.8" fill="#fff" opacity="0.59"/>
<circle cx="94" cy="4.4" r="0.8" fill="#fff" opacity="0.67"/>
<circle cx="2.5" cy="208.5" r="0.7" fill="#fff" opacity="0.90"/>
<circle cx="125.4" cy="537.7" r="1.1" fill="#fff" opacity="0.22"/>
<circle cx="217.9" cy="347.1" r="1.3" fill="#fff" opacity="0.24"/>
<circle cx="341.3" cy="407.3" r="1.6" fill="#fff" opacity="0.38"/>
<circle cx="116.9" cy="180.3" r="0.7" fill="#fff" opacity="0.90"/>
<circle cx="274.8" cy="516.9" r="0.55" fill="#fff" opacity="0.32"/>
<circle cx="16.6" cy="104.7" r="0.6" fill="#fff" opacity="0.67"/>
<circle cx="168" cy="14.9" r="1.3" fill="#fff" opacity="0.42"/>
<circle cx="318.8" cy="6.5" r="0.7" fill="#fff" opacity="0.24"/>
<circle cx="226" cy="475.5" r="0.8" fill="#fff" opacity="0.77"/>
<circle cx="491.2" cy="455.9" r="1.0" fill="#fff" opacity="0.42"/>
<circle cx="329.5" cy="412.9" r="0.6" fill="#fff" opacity="0.86"/>
<circle cx="298.9" cy="520.8" r="1.0" fill="#fff" opacity="0.38"/>
<circle cx="564" cy="14.6" r="1.6" fill="#fff" opacity="0.30"/>
<circle cx="200.6" cy="449.1" r="1.3" fill="#fff" opacity="0.66"/>
<circle cx="502.7" cy="226.1" r="1.1" fill="#fff" opacity="0.45"/>
<circle cx="173.1" cy="561.2" r="0.9" fill="#fff" opacity="0.62"/>
<circle cx="164.1" cy="132.4" r="0.7" fill="#fff" opacity="0.35"/>
<circle cx="460.8" cy="338.7" r="0.7" fill="#fff" opacity="0.32"/>
<circle cx="65.6" cy="88.6" r="0.9" fill="#fff" opacity="0.33"/>
<circle cx="13.6" cy="247.8" r="0.55" fill="#fff" opacity="0.48"/>
<circle cx="199.3" cy="333" r="0.7" fill="#fff" opacity="0.21"/>
<circle cx="108.2" cy="41.2" r="1.6" fill="#fff" opacity="0.28"/>
<circle cx="612.3" cy="266.7" r="0.7" fill="#fff" opacity="0.55"/>
<circle cx="483.9" cy="550.4" r="0.8" fill="#fff" opacity="0.25"/>
<circle cx="241.9" cy="571" r="0.7" fill="#fff" opacity="0.74"/>
<circle cx="325.6" cy="6.2" r="1.0" fill="#fff" opacity="0.84"/>
<circle cx="34.3" cy="382.2" r="0.9" fill="#fff" opacity="0.82"/>
<circle cx="530.9" cy="389.7" r="1.3" fill="#fff" opacity="0.88"/>
<circle cx="573.4" cy="75.3" r="1.1" fill="#fff" opacity="0.51"/>
<circle cx="289.7" cy="518.7" r="1.3" fill="#fff" opacity="0.36"/>
<circle cx="372.4" cy="355.1" r="1.3" fill="#fff" opacity="0.84"/>
<circle cx="327.5" cy="280" r="0.8" fill="#fff" opacity="0.62"/>
<circle cx="368.6" cy="577.6" r="0.7" fill="#fff" opacity="0.58"/>
<circle cx="203.4" cy="158.7" r="1.6" fill="#fff" opacity="0.42"/>
<circle cx="456.8" cy="613.4" r="1.0" fill="#fff" opacity="0.24"/>
<circle cx="600.2" cy="466.8" r="1.1" fill="#fff" opacity="0.28"/>
<circle cx="115.9" cy="572.8" r="0.7" fill="#fff" opacity="0.78"/>
<circle cx="494.6" cy="317.2" r="0.8" fill="#fff" opacity="0.25"/>
<circle cx="539.5" cy="441.2" r="0.8" fill="#fff" opacity="0.56"/>
<circle cx="216.2" cy="128.6" r="0.55" fill="#fff" opacity="0.81"/>
<circle cx="121.5" cy="173.4" r="0.7" fill="#fff" opacity="0.25"/>
<circle cx="344.1" cy="488" r="1.1" fill="#fff" opacity="0.81"/>
<circle cx="44.7" cy="307.9" r="0.55" fill="#fff" opacity="0.74"/>
<circle cx="340.6" cy="561.5" r="0.7" fill="#fff" opacity="0.77"/>
<circle cx="110.7" cy="206.9" r="0.9" fill="#fff" opacity="0.87"/>
<circle cx="136.1" cy="178.9" r="1.0" fill="#fff" opacity="0.33"/>
<circle cx="241" cy="526.5" r="1.6" fill="#fff" opacity="0.53"/>
<circle cx="303.3" cy="54.7" r="0.7" fill="#fff" opacity="0.57"/>
<circle cx="196.2" cy="593.4" r="0.7" fill="#fff" opacity="0.59"/>
<circle cx="616.5" cy="234.5" r="0.9" fill="#fff" opacity="0.69"/>
<circle cx="523.7" cy="586.5" r="1.6" fill="#fff" opacity="0.35"/>
<circle cx="129.9" cy="475.2" r="0.7" fill="#fff" opacity="0.69"/>
<circle cx="289.2" cy="80" r="0.6" fill="#fff" opacity="0.38"/>
<circle cx="213.3" cy="386.2" r="0.8" fill="#fff" opacity="0.34"/>
<circle cx="616.8" cy="428.8" r="0.9" fill="#fff" opacity="0.81"/>
<circle cx="477.3" cy="124.1" r="0.6" fill="#fff" opacity="0.64"/>
<circle cx="263.3" cy="508.5" r="1.0" fill="#fff" opacity="0.40"/>
<circle cx="82.9" cy="76.6" r="0.6" fill="#fff" opacity="0.44"/>
<circle cx="436.2" cy="145.7" r="1.6" fill="#fff" opacity="0.28"/>
<circle cx="76.4" cy="543.6" r="0.6" fill="#fff" opacity="0.67"/>
<circle cx="282.1" cy="578.9" r="1.0" fill="#fff" opacity="0.34"/>
<circle cx="256.7" cy="136.6" r="0.6" fill="#fff" opacity="0.46"/>
<circle cx="206.6" cy="362.3" r="0.8" fill="#fff" opacity="0.41"/>
<circle cx="430.8" cy="416.7" r="0.7" fill="#fff" opacity="0.21"/>
<circle cx="232.4" cy="367.8" r="0.8" fill="#fff" opacity="0.47"/>
<circle cx="172.6" cy="63.3" r="1.6" fill="#fff" opacity="0.27"/>
<circle cx="407.6" cy="280.9" r="0.7" fill="#fff" opacity="0.26"/>
<circle cx="225.4" cy="232.2" r="1.6" fill="#fff" opacity="0.67"/>
<circle cx="213.2" cy="556.7" r="0.55" fill="#fff" opacity="0.67"/>
<circle cx="96.5" cy="45" r="0.7" fill="#fff" opacity="0.53"/>
<circle cx="195.9" cy="415.9" r="1.6" fill="#fff" opacity="0.24"/>
<circle cx="137.8" cy="13" r="1.0" fill="#fff" opacity="0.50"/>
<circle cx="142.6" cy="335.6" r="0.6" fill="#fff" opacity="0.90"/>
<circle cx="41.3" cy="286.6" r="1.0" fill="#fff" opacity="0.75"/>
<circle cx="577.9" cy="321.1" r="1.6" fill="#fff" opacity="0.35"/>
<circle cx="229.3" cy="88.6" r="1.0" fill="#fff" opacity="0.27"/>
<circle cx="492.7" cy="2.2" r="1.6" fill="#fff" opacity="0.75"/>
<circle cx="561.8" cy="411.3" r="1.1" fill="#fff" opacity="0.74"/>
<circle cx="74.2" cy="290.6" r="0.55" fill="#fff" opacity="0.46"/>
<circle cx="227" cy="516" r="0.55" fill="#fff" opacity="0.28"/>
<circle cx="256" cy="347.9" r="0.6" fill="#fff" opacity="0.74"/>
<circle cx="58.4" cy="619.3" r="1.6" fill="#fff" opacity="0.29"/>
<circle cx="352.1" cy="80.4" r="0.6" fill="#fff" opacity="0.56"/>
<circle cx="191.2" cy="218.7" r="0.7" fill="#fff" opacity="0.37"/>
<circle cx="256.6" cy="33.7" r="0.7" fill="#fff" opacity="0.61"/>
<circle cx="105.5" cy="64.8" r="0.7" fill="#fff" opacity="0.80"/>
<circle cx="64.7" cy="527.1" r="0.7" fill="#fff" opacity="0.30"/>
<circle cx="349.9" cy="107.7" r="1.6" fill="#fff" opacity="0.63"/>
<circle cx="535.6" cy="597.5" r="1.0" fill="#fff" opacity="0.78"/>
<circle cx="141.9" cy="494.2" r="0.6" fill="#fff" opacity="0.71"/>
<circle cx="441.8" cy="97.1" r="1.3" fill="#fff" opacity="0.63"/>
<circle cx="251.1" cy="305.9" r="1.3" fill="#fff" opacity="0.65"/>
<circle cx="525.6" cy="28.6" r="1.0" fill="#fff" opacity="0.41"/>
<circle cx="133.1" cy="332.8" r="1.0" fill="#fff" opacity="0.43"/>
<circle cx="303.2" cy="405.5" r="1.3" fill="#fff" opacity="0.86"/>
<circle cx="352.1" cy="310.6" r="0.6" fill="#fff" opacity="0.48"/>
<circle cx="185.6" cy="458.4" r="0.8" fill="#fff" opacity="0.35"/>
<circle cx="52.4" cy="490.9" r="1.0" fill="#fff" opacity="0.45"/>
<circle cx="266.9" cy="279.5" r="0.55" fill="#fff" opacity="0.42"/>
<circle cx="329.3" cy="101.2" r="1.0" fill="#fff" opacity="0.58"/>
<circle cx="247.8" cy="138.1" r="0.6" fill="#fff" opacity="0.70"/>
<circle cx="20.1" cy="223" r="0.7" fill="#fff" opacity="0.56"/>
<circle cx="326.7" cy="454.5" r="0.9" fill="#fff" opacity="0.48"/>
<circle cx="599.1" cy="4.4" r="1.6" fill="#fff" opacity="0.45"/>
<circle cx="152.7" cy="597.3" r="0.9" fill="#fff" opacity="0.79"/>
<circle cx="130.1" cy="472.8" r="0.55" fill="#fff" opacity="0.42"/>
<circle cx="308.5" cy="320" r="0.9" fill="#fff" opacity="0.24"/>
<circle cx="57.6" cy="156.2" r="0.8" fill="#fff" opacity="0.77"/>
<circle cx="585.1" cy="401.3" r="0.9" fill="#fff" opacity="0.48"/>
<circle cx="177.2" cy="421.5" r="0.6" fill="#fff" opacity="0.48"/>
<circle cx="139.7" cy="155.2" r="0.55" fill="#fff" opacity="0.42"/>
<circle cx="508" cy="488.7" r="0.8" fill="#fff" opacity="0.24"/>
<circle cx="473.4" cy="29.7" r="1.6" fill="#fff" opacity="0.26"/>
<circle cx="85.9" cy="210.8" r="0.55" fill="#fff" opacity="0.63"/>
<circle cx="423.4" cy="131.1" r="1.3" fill="#fff" opacity="0.20"/>
<circle cx="456.9" cy="259.4" r="0.6" fill="#fff" opacity="0.32"/>
<circle cx="51.7" cy="424.9" r="0.7" fill="#fff" opacity="0.46"/>
<circle cx="277.6" cy="270.9" r="0.6" fill="#fff" opacity="0.51"/>
<circle cx="556.3" cy="451.2" r="0.6" fill="#fff" opacity="0.87"/>
<circle cx="220.7" cy="515.6" r="0.6" fill="#fff" opacity="0.69"/>
<circle cx="246.2" cy="428.4" r="1.3" fill="#fff" opacity="0.28"/>
<circle cx="538.1" cy="60.1" r="0.9" fill="#fff" opacity="0.58"/>
<circle cx="520.3" cy="76.5" r="0.8" fill="#fff" opacity="0.53"/>
<circle cx="19.5" cy="267.8" r="1.0" fill="#fff" opacity="0.34"/>
<circle cx="435.8" cy="306.5" r="1.0" fill="#fff" opacity="0.68"/>
<circle cx="240.6" cy="482.7" r="0.6" fill="#fff" opacity="0.58"/>
<circle cx="530.1" cy="479.2" r="0.9" fill="#fff" opacity="0.34"/>
<circle cx="214.7" cy="101.6" r="0.9" fill="#fff" opacity="0.46"/>
<circle cx="497.8" cy="423.9" r="1.1" fill="#fff" opacity="0.60"/>
<circle cx="522.2" cy="222.1" r="1.6" fill="#fff" opacity="0.30"/>
<circle cx="436.4" cy="245.7" r="0.6" fill="#fff" opacity="0.69"/>
<circle cx="144.8" cy="162" r="1.0" fill="#fff" opacity="0.60"/>
<circle cx="159.4" cy="39.8" r="0.8" fill="#fff" opacity="0.46"/>
<circle cx="444.2" cy="268.3" r="1.6" fill="#fff" opacity="0.25"/>
<circle cx="111.4" cy="256.5" r="1.3" fill="#fff" opacity="0.52"/>
<circle cx="301.8" cy="143.4" r="1.6" fill="#fff" opacity="0.27"/>
<circle cx="190.1" cy="525.4" r="0.55" fill="#fff" opacity="0.90"/>
<circle cx="218.2" cy="98.9" r="1.1" fill="#fff" opacity="0.43"/>
<circle cx="94" cy="589.5" r="0.9" fill="#fff" opacity="0.76"/>
<circle cx="60.6" cy="486.1" r="0.7" fill="#fff" opacity="0.89"/>
<circle cx="533.9" cy="457.3" r="0.9" fill="#fff" opacity="0.28"/>
<circle cx="474.2" cy="361.1" r="0.9" fill="#fff" opacity="0.68"/>
<circle cx="225.7" cy="589.6" r="0.8" fill="#fff" opacity="0.63"/>
<circle cx="515" cy="608.8" r="0.6" fill="#fff" opacity="0.37"/>
<circle cx="12.6" cy="333.1" r="0.8" fill="#fff" opacity="0.67"/>
<circle cx="177.6" cy="347.7" r="0.8" fill="#fff" opacity="0.54"/>
<circle cx="169" cy="176.7" r="0.8" fill="#fff" opacity="0.86"/>
<circle cx="94.3" cy="241.6" r="1.3" fill="#fff" opacity="0.80"/>
<circle cx="377.8" cy="337.1" r="0.7" fill="#fff" opacity="0.57"/>
<circle cx="409.2" cy="569.9" r="0.8" fill="#fff" opacity="0.41"/>
<circle cx="264.8" cy="483.6" r="1.3" fill="#fff" opacity="0.36"/>
<circle cx="280.8" cy="229.7" r="0.7" fill="#fff" opacity="0.86"/>
<circle cx="313.5" cy="350.9" r="0.9" fill="#fff" opacity="0.82"/>
<circle cx="46.7" cy="340.9" r="1.6" fill="#fff" opacity="0.86"/>
<circle cx="407.4" cy="44.5" r="0.55" fill="#fff" opacity="0.27"/>
<circle cx="350.6" cy="74.2" r="0.9" fill="#fff" opacity="0.42"/>
<circle cx="540.7" cy="38.1" r="0.6" fill="#fff" opacity="0.30"/>
<circle cx="256.2" cy="88.6" r="1.3" fill="#fff" opacity="0.58"/>
<circle cx="270.8" cy="421.3" r="0.6" fill="#fff" opacity="0.57"/>
<circle cx="219.6" cy="309.4" r="0.7" fill="#fff" opacity="0.82"/>
<circle cx="63.1" cy="86.5" r="0.7" fill="#fff" opacity="0.26"/>
<circle cx="301.9" cy="345.7" r="1.3" fill="#fff" opacity="0.26"/>
<circle cx="557.6" cy="158.8" r="0.7" fill="#fff" opacity="0.69"/>
<circle cx="582.1" cy="605.1" r="0.7" fill="#fff" opacity="0.80"/>
<circle cx="579.7" cy="12.5" r="1.1" fill="#fff" opacity="0.76"/>
<circle cx="617.9" cy="354.3" r="1.6" fill="#fff" opacity="0.42"/>
<circle cx="105.1" cy="476.9" r="0.7" fill="#fff" opacity="0.87"/>
<circle cx="19.7" cy="69.3" r="0.8" fill="#fff" opacity="0.87"/>
<circle cx="14.9" cy="19.8" r="0.7" fill="#fff" opacity="0.68"/>
<circle cx="322.3" cy="359.6" r="0.6" fill="#fff" opacity="0.20"/>
<circle cx="42.1" cy="492.4" r="1.0" fill="#fff" opacity="0.78"/>
<circle cx="252.7" cy="208" r="0.9" fill="#fff" opacity="0.47"/>
<circle cx="557.1" cy="149.9" r="0.55" fill="#fff" opacity="0.61"/>
<circle cx="326.2" cy="207.9" r="0.9" fill="#fff" opacity="0.52"/>
<circle cx="145.3" cy="546.8" r="0.7" fill="#fff" opacity="0.34"/>
<circle cx="131.1" cy="279.8" r="0.7" fill="#fff" opacity="0.75"/>
<circle cx="206.4" cy="147.7" r="1.6" fill="#fff" opacity="0.38"/>
<circle cx="324.1" cy="158.1" r="0.55" fill="#fff" opacity="0.33"/>
<circle cx="144" cy="186.9" r="0.9" fill="#fff" opacity="0.72"/>
<circle cx="126.7" cy="21.4" r="0.7" fill="#fff" opacity="0.58"/>
<circle cx="48.7" cy="473.4" r="0.7" fill="#fff" opacity="0.51"/>
<circle cx="27.9" cy="345.4" r="0.7" fill="#fff" opacity="0.46"/>
<circle cx="221" cy="564.8" r="1.0" fill="#fff" opacity="0.90"/>
<circle cx="259.8" cy="415.7" r="0.7" fill="#fff" opacity="0.44"/>
<circle cx="490.1" cy="235.3" r="0.8" fill="#fff" opacity="0.59"/>
<circle cx="585.2" cy="42.3" r="0.55" fill="#fff" opacity="0.24"/>
<circle cx="20.4" cy="591.6" r="1.0" fill="#fff" opacity="0.84"/>
<circle cx="88.9" cy="127.5" r="1.1" fill="#fff" opacity="0.87"/>
<circle cx="577.5" cy="212" r="0.7" fill="#fff" opacity="0.30"/>
<circle cx="443" cy="586.3" r="0.7" fill="#fff" opacity="0.37"/>
<circle cx="435" cy="146.9" r="1.1" fill="#fff" opacity="0.46"/>
<circle cx="450.6" cy="572.7" r="0.7" fill="#fff" opacity="0.86"/>
<circle cx="44.4" cy="114.6" r="0.9" fill="#fff" opacity="0.67"/>
<circle cx="76.3" cy="199.2" r="1.6" fill="#fff" opacity="0.29"/>
<circle cx="326.7" cy="335" r="1.6" fill="#fff" opacity="0.51"/>
<circle cx="498.2" cy="162.3" r="0.6" fill="#fff" opacity="0.26"/>
<circle cx="138.2" cy="47.5" r="0.8" fill="#fff" opacity="0.88"/>
<circle cx="579.2" cy="419.8" r="0.7" fill="#fff" opacity="0.31"/>
<circle cx="204.9" cy="352.4" r="0.8" fill="#fff" opacity="0.54"/>
<circle cx="553.8" cy="370.6" r="0.9" fill="#fff" opacity="0.62"/>
<circle cx="524.5" cy="288.3" r="0.7" fill="#fff" opacity="0.30"/>
<circle cx="290.8" cy="420.7" r="1.1" fill="#fff" opacity="0.73"/>
<circle cx="248.3" cy="32.2" r="0.7" fill="#fff" opacity="0.23"/>
<circle cx="248.7" cy="510" r="0.55" fill="#fff" opacity="0.22"/>
<circle cx="262.9" cy="596.1" r="1.6" fill="#fff" opacity="0.66"/>
<circle cx="288.4" cy="113.2" r="0.55" fill="#fff" opacity="0.32"/>
<circle cx="602.6" cy="208.7" r="1.6" fill="#fff" opacity="0.59"/>
<circle cx="426.4" cy="155.5" r="0.9" fill="#fff" opacity="0.32"/>
<circle cx="89.1" cy="359.2" r="1.6" fill="#fff" opacity="0.49"/>
<circle cx="334.9" cy="285.4" r="0.9" fill="#fff" opacity="0.86"/>
<circle cx="304.7" cy="420.1" r="1.6" fill="#fff" opacity="0.80"/>
<circle cx="546.8" cy="100.8" r="1.3" fill="#fff" opacity="0.59"/>
<circle cx="570" cy="474.4" r="0.9" fill="#fff" opacity="0.36"/>
<circle cx="361.9" cy="97.7" r="0.9" fill="#fff" opacity="0.40"/>
<circle cx="60.1" cy="426.1" r="0.9" fill="#fff" opacity="0.54"/>
<circle cx="69.5" cy="462" r="1.3" fill="#fff" opacity="0.66"/>
<circle cx="425.1" cy="410.9" r="1.0" fill="#fff" opacity="0.39"/>
<circle cx="356" cy="391.8" r="1.1" fill="#fff" opacity="0.24"/>
</pattern></defs>
<rect width="3327" height="1817" fill="url(#gp)" opacity="0.045" mask="url(#sm)"/>
<rect width="3327" height="1817" fill="url(#gl)" opacity="0.55" mask="url(#gmk)"/>
<rect width="3327" height="1817" fill="url(#sp)" mask="url(#sm)"/>
<circle cx="1471.3" cy="1161.4" r="1.7" fill="#fff" opacity="0.51"/>
<circle cx="674.1" cy="978.5" r="1.7" fill="#fff" opacity="0.58"/>
<circle cx="737.9" cy="1059.7" r="2.2" fill="#fff" opacity="0.47"/>
<circle cx="1131.5" cy="1150.5" r="1.7" fill="#fff" opacity="0.61"/>
<circle cx="758.7" cy="131.7" r="2.8" fill="#fff" opacity="0.52"/>
<circle cx="1461.8" cy="1209.6" r="2.3" fill="#fff" opacity="0.87"/>
<circle cx="2363.3" cy="1253" r="2.2" fill="#fff" opacity="0.58"/>
<circle cx="2421.5" cy="232.5" r="1.9" fill="#fff" opacity="0.78"/>
<circle cx="1345.7" cy="540.9" r="2.8" fill="#fff" opacity="0.50"/>
<circle cx="1897.2" cy="1298" r="1.7" fill="#fff" opacity="0.81"/>
<circle cx="3207.5" cy="1195.4" r="2.3" fill="#fff" opacity="0.74"/>
<circle cx="2441.8" cy="726.5" r="2.9" fill="#fff" opacity="0.84"/>
<circle cx="3262.5" cy="290.3" r="2.0" fill="#fff" opacity="0.58"/>
<circle cx="1663.4" cy="461.9" r="2.5" fill="#fff" opacity="0.80"/>
<circle cx="1313" cy="1286.7" r="2.5" fill="#fff" opacity="0.79"/>
<circle cx="2424.7" cy="792.5" r="2.2" fill="#fff" opacity="0.63"/>
<circle cx="2650.3" cy="4.6" r="2.0" fill="#fff" opacity="0.67"/>
<circle cx="3120.8" cy="408.8" r="2.6" fill="#fff" opacity="0.47"/>
<circle cx="3009.6" cy="908.3" r="3.0" fill="#fff" opacity="0.55"/>
<circle cx="2286.1" cy="213.8" r="1.8" fill="#fff" opacity="0.64"/>
<circle cx="1872.9" cy="1255.3" r="1.6" fill="#fff" opacity="0.57"/>
<circle cx="2704.3" cy="187.6" r="2.1" fill="#fff" opacity="0.47"/>
<circle cx="672.6" cy="968.2" r="2.4" fill="#fff" opacity="0.59"/>
<circle cx="1865.7" cy="103" r="1.8" fill="#fff" opacity="0.55"/>
<circle cx="3304.3" cy="119.7" r="1.7" fill="#fff" opacity="0.77"/>
<circle cx="737.1" cy="1374.7" r="2.3" fill="#fff" opacity="0.58"/>
<circle cx="3143.7" cy="661.8" r="2.2" fill="#fff" opacity="0.63"/>
<circle cx="1526.7" cy="1741.9" r="2.0" fill="#fff" opacity="0.84"/>
<circle cx="2936.2" cy="965.7" r="1.9" fill="#fff" opacity="0.86"/>
<circle cx="2753.4" cy="1665.3" r="1.7" fill="#fff" opacity="0.64"/>
<circle cx="1898" cy="755.8" r="2.5" fill="#fff" opacity="0.81"/>
<circle cx="3121.6" cy="908.5" r="2.9" fill="#fff" opacity="0.71"/>
<circle cx="1744.4" cy="22.2" r="1.7" fill="#fff" opacity="0.53"/>
<circle cx="3291.5" cy="1117.8" r="1.9" fill="#fff" opacity="0.89"/>
<circle cx="2746.6" cy="1062.3" r="2.9" fill="#fff" opacity="0.57"/>
<circle cx="2774.2" cy="75.4" r="1.7" fill="#fff" opacity="0.48"/>
<circle cx="3261.2" cy="1729.6" r="1.9" fill="#fff" opacity="0.56"/>
<circle cx="3066.9" cy="1000.1" r="1.6" fill="#fff" opacity="0.66"/>
<circle cx="2277.1" cy="1577.9" r="3.0" fill="#fff" opacity="0.67"/>
<circle cx="2739.9" cy="444.8" r="2.7" fill="#fff" opacity="0.56"/>
<circle cx="2954.3" cy="742.9" r="1.7" fill="#fff" opacity="0.70"/>
<circle cx="1268.7" cy="1036.3" r="2.2" fill="#fff" opacity="0.62"/>
<circle cx="2626.1" cy="1327.2" r="2.5" fill="#fff" opacity="0.54"/>
<circle cx="1268.6" cy="1347.3" r="3.0" fill="#fff" opacity="0.84"/>
<circle cx="3125.5" cy="1159.3" r="2.1" fill="#fff" opacity="0.46"/>
<circle cx="2877.8" cy="1310" r="2.4" fill="#fff" opacity="0.78"/>
<circle cx="2971.8" cy="348.1" r="1.6" fill="#fff" opacity="0.49"/>
<circle cx="1330.3" cy="376.2" r="2.5" fill="#fff" opacity="0.54"/>
<circle cx="1786.7" cy="383.8" r="1.6" fill="#fff" opacity="0.84"/>
<circle cx="2296.3" cy="161.8" r="2.6" fill="#fff" opacity="0.73"/>
<circle cx="2100.9" cy="1197.9" r="2.5" fill="#fff" opacity="0.68"/>
<circle cx="2783.2" cy="1690" r="2.8" fill="#fff" opacity="0.48"/>
<circle cx="1218.5" cy="415.7" r="2.4" fill="#fff" opacity="0.72"/>
<circle cx="3317.6" cy="826.3" r="1.9" fill="#fff" opacity="0.58"/>
<circle cx="2238.2" cy="154.7" r="2.4" fill="#fff" opacity="0.78"/>
<circle cx="2136.1" cy="711.1" r="2.8" fill="#fff" opacity="0.61"/>
<circle cx="1763.4" cy="164.1" r="2.1" fill="#fff" opacity="0.84"/>
<circle cx="1417.2" cy="1736.7" r="2.6" fill="#fff" opacity="0.65"/>
<circle cx="1958.5" cy="93.8" r="1.9" fill="#fff" opacity="0.74"/>
<circle cx="781.6" cy="1776.5" r="2.6" fill="#fff" opacity="0.60"/>
<circle cx="1594.6" cy="868.9" r="2.0" fill="#fff" opacity="0.76"/>
<circle cx="1711.5" cy="285.5" r="1.6" fill="#fff" opacity="0.79"/>
<circle cx="2194.2" cy="1471.3" r="2.3" fill="#fff" opacity="0.46"/>
<circle cx="2663.9" cy="623.6" r="2.9" fill="#fff" opacity="0.60"/>
<circle cx="3115.5" cy="1441.6" r="2.3" fill="#fff" opacity="0.67"/>
<circle cx="3071.1" cy="1757.4" r="2.5" fill="#fff" opacity="0.49"/>
<circle cx="731.5" cy="841" r="2.4" fill="#fff" opacity="0.65"/>
<circle cx="661.5" cy="527.4" r="2.2" fill="#fff" opacity="0.47"/>
<circle cx="624.7" cy="992" r="1.8" fill="#fff" opacity="0.61"/>
<circle cx="1189.1" cy="1281.6" r="1.8" fill="#fff" opacity="0.71"/>
<circle cx="2000.7" cy="980.3" r="2.2" fill="#fff" opacity="0.63"/>
<circle cx="2749.6" cy="1138.1" r="2.8" fill="#fff" opacity="0.73"/>
<circle cx="1163.5" cy="46.2" r="2.9" fill="#fff" opacity="0.74"/>
<circle cx="672.9" cy="347.6" r="1.6" fill="#fff" opacity="0.48"/>
<circle cx="2188.2" cy="1209.3" r="2.0" fill="#fff" opacity="0.60"/>
<circle cx="2303.5" cy="658.3" r="2.1" fill="#fff" opacity="0.82"/>
<circle cx="3066.3" cy="1536.7" r="2.6" fill="#fff" opacity="0.46"/>
<circle cx="3101.8" cy="1432.1" r="2.0" fill="#fff" opacity="0.68"/>
<circle cx="1579.4" cy="997.1" r="2.4" fill="#fff" opacity="0.59"/>
<circle cx="2365.5" cy="1674.8" r="2.7" fill="#fff" opacity="0.85"/>
</svg>
<div class="a" style="left:99px;top:241.3px;width:908px;height:846.7px;background:#fff;box-shadow:0 2px 14px rgba(0,0,0,0.62);"></div>
<div class="a" style="left:99px;top:241.3px;width:908px;height:42.2px;background:#e6e6e6;"></div>
<div class="a" style="left:99px;top:283.5px;width:157.8px;height:62.7px;background:#0078d7;"></div>
<div class="a" style="left:849.5px;top:346px;width:1px;height:700px;background:#e4e4ea;"></div>
<svg class="a" style="left:99px;top:346px" width="750" height="742" viewBox="99 346 750 742"><defs><clipPath id="k1"><circle cx="552" cy="719.5" r="145"/></clipPath><clipPath id="k2"><circle cx="451.5" cy="860" r="145"/></clipPath></defs><circle cx="552" cy="719.5" r="145" fill="#00e5ff"/><circle cx="451.5" cy="860" r="145" fill="#ff2cff"/><circle cx="655" cy="860" r="145" fill="#fff000"/><g clip-path="url(#k1)"><circle cx="451.5" cy="860" r="145" fill="#000cff"/><circle cx="655" cy="860" r="145" fill="#00d900"/></g><g clip-path="url(#k2)"><circle cx="655" cy="860" r="145" fill="#ff1c00"/></g><g clip-path="url(#k1)"><g clip-path="url(#k2)"><circle cx="655" cy="860" r="145" fill="#000"/></g></g></svg>
<div class="a" style="left:1023px;top:202px;width:2273px;height:1335.6px;background:#1e212b;box-shadow:0 2px 14px rgba(0,0,0,0.62);"></div>
<div class="a" style="left:1413px;top:343.5px;width:1879px;height:1192.5px;background:#000;border-right:1.5px solid #8e9299;border-bottom:1.5px solid #8e9299;"></div>
<div class="a" style="left:1026px;top:341px;width:2270px;height:2.8px;background:#0b0c10;"></div>
<div class="a" style="left:1088px;top:343.5px;width:3.3px;height:1193.5px;background:#000;"></div>
<div class="a" style="left:1406.5px;top:343.5px;width:6.5px;height:1193.5px;background:#2a2d36;"></div>
<div class="a" style="left:1406.5px;top:343.5px;width:6px;height:775.5px;background:#3f424a;"></div>
<div class="a" style="left:1091.3px;top:1336.5px;width:315px;height:3.2px;background:#07080b;"></div>
<div class="a" style="left:1091.3px;top:1488px;width:315px;height:3.2px;background:#07080b;"></div>
<div class="a" style="left:3179.3px;top:295.3px;width:53px;height:42.2px;background:#0a7cff;"></div>
<div class="a" style="left:3237px;top:295.3px;width:47.5px;height:42.2px;background:#252832;"></div>
<div class="a" style="left:1088.2px;top:300px;width:2.6px;height:33px;background:#07080b;"></div>
<div class="a" style="left:1214.6px;top:300px;width:2.6px;height:33px;background:#07080b;"></div>
<div class="a" style="left:1466.8px;top:300px;width:2.6px;height:33px;background:#07080b;"></div>
<div class="a" style="left:1593.2px;top:300px;width:2.6px;height:33px;background:#07080b;"></div>
<div class="a" style="left:1037.4px;top:542.4px;width:42px;height:2.6px;background:#07080b;"></div>
<div class="a" style="left:1104px;top:1282.4px;width:289.7px;height:31.4px;background:#2a2f3b;border-radius:4px;"></div>
<div class="a" style="left:1106.7px;top:1425.9px;width:133.5px;height:41.4px;background:#252a35;border-radius:4px;"></div>
<div class="a" style="left:2880.5px;top:861.4px;width:394px;height:656.4px;background:#1f232e;"></div>
<div class="a" style="left:2890.6px;top:924px;width:374.4px;height:42px;background:#262b37;border-radius:4px;"></div>
<div class="a" style="left:3015.3px;top:924px;width:124px;height:42px;background:#0a7cff;"></div>
<div class="a" style="left:2890.6px;top:977.5px;width:374.4px;height:527px;background:#232835;border-radius:6px;"></div>
<svg class="a" style="left:0;top:0" width="3327" height="1817" viewBox="0 0 3327 1817"><defs><linearGradient id="lg" x1="0.4" y1="0" x2="0.6" y2="1"><stop offset="0" stop-color="#3558ff"/><stop offset="0.45" stop-color="#6a50fb"/><stop offset="1" stop-color="#cf4df2"/></linearGradient><linearGradient id="ct" x1="0" y1="0" x2="1" y2="0"><stop offset="0" stop-color="#0a72ff"/><stop offset="0.2" stop-color="#2f7fff"/><stop offset="0.42" stop-color="#8f9cf0"/><stop offset="0.6" stop-color="#d3a9b0"/><stop offset="0.8" stop-color="#f5a850"/><stop offset="1" stop-color="#ffb000"/></linearGradient><linearGradient id="hue" x1="0" y1="0" x2="1" y2="0"><stop offset="0" stop-color="#ff1500"/><stop offset="0.1" stop-color="#ff9900"/><stop offset="0.19" stop-color="#d4e600"/><stop offset="0.33" stop-color="#0cd400"/><stop offset="0.42" stop-color="#00e08a"/><stop offset="0.5" stop-color="#00e5ff"/><stop offset="0.58" stop-color="#0090ff"/><stop offset="0.667" stop-color="#1818ff"/><stop offset="0.76" stop-color="#a020ff"/><stop offset="0.84" stop-color="#ff1ad8"/><stop offset="0.93" stop-color="#ff1a60"/><stop offset="1" stop-color="#ff1a1a"/></linearGradient><linearGradient id="sat" x1="0" y1="0" x2="1" y2="0"><stop offset="0" stop-color="#ffffff"/><stop offset="0.5" stop-color="#9699e0"/><stop offset="0.88" stop-color="#3a3fc8"/><stop offset="1" stop-color="#2428ba"/></linearGradient><linearGradient id="val" x1="0" y1="0" x2="1" y2="0"><stop offset="0" stop-color="#020208"/><stop offset="1" stop-color="#0000ff"/></linearGradient></defs>
<text class="cj" x="115.2" y="269.2" font-size="15.5" fill="#111">照片</text>
<g stroke="#d2d2d2" stroke-width="1.3" fill="none"><path d="M848 263.5h14"/><rect x="909.5" y="257" width="13" height="13"/><path d="M969.5 257l13 13m0-13l-13 13"/></g>
<g transform="translate(125.6 315.3)"><rect x="-9" y="-9" width="18" height="18" fill="none" stroke="#fff" stroke-width="1.6"/><path d="M-9 9V3.5L-3.5 -2.5 3 4.5 5.5 2 9 5.5V9Z" fill="#fff"/><circle cx="4.2" cy="-4" r="1.9" fill="#fff"/></g>
<text class="cj" x="146.6" y="320.1" font-size="15.6" fill="#fff">查看所有照片</text>
<path fill="none" stroke="#1a1a1a" stroke-width="1.5" d="M273 314.8h20.6M283.3 304.5v20.6"/>
<text class="cj" x="304.7" y="319.8" font-size="15.6" fill="#1a1a1a">添加到</text>
<g transform="translate(423 315)" fill="none" stroke="#1a1a1a" stroke-width="1.5"><circle cx="-3.2" cy="-3" r="6.6"/><path d="M1.6 1.8L10.2 10.4M-6.4 -3h6.4M-3.2 -6.2v6.4"/></g>
<g transform="translate(487.4 315)" fill="none" stroke="#1a1a1a" stroke-width="1.5"><path d="M-7.5 -6.5h15M-3 -6.5v-2.6h6v2.6M-6 -6.5v14.5q0 1.5 1.5 1.5h9q1.5 0 1.5 -1.5v-14.5M-2.7 -2.5v8.5M0 -2.5v8.5M2.7 -2.5v8.5"/></g>
<g transform="translate(553.4 315)" fill="none" stroke="#1a1a1a" stroke-width="1.5"><path d="M0 8.8L-8.4 0.4C-10.6 -1.9 -10.4 -5.3 -8.3 -7.2C-6 -9.2 -2.6 -8.8 0 -5.4C2.6 -8.8 6 -9.2 8.3 -7.2C10.4 -5.3 10.6 -1.9 8.4 0.4Z" stroke-linejoin="round"/></g>
<g transform="translate(618 315)" fill="none" stroke="#1a1a1a" stroke-width="1.5"><path d="M-10 0.6A10 10 0 1 1 5.6 8.3"/><path d="M3.4 5.2V10.4H8.8"/><circle cx="0" cy="-0.2" r="2"/></g>
<g transform="translate(683.3 315)" fill="none" stroke="#1a1a1a" stroke-width="1.5"><path d="M-5.9 -10.1V5.7H10M-10.9 -6.4H5.3V10.4M-5.9 5.7L9.1 -9.7"/></g>
<g transform="translate(799.6 315)" stroke="#1a1a1a" stroke-width="1.5" fill="#fff" stroke-linejoin="round"><g transform="translate(1.4 1.6) rotate(45)"><path d="M-11.6 -2.6H4.6L11.8 0L4.6 2.6H-11.6A2.6 2.6 0 0 1 -11.6 -2.6ZM4.6 -2.6V2.6M-7.4 -2.6V2.6"/></g><g transform="translate(0.1 1.1) rotate(-45)"><path d="M-8 -2.2H8.6A2.2 2.2 0 0 1 8.6 2.2H-8ZM-4.4 -2.2V2.2M-6.4 -2.2V2.2"/><path d="M-8 -2.6C-10.6 -3 -12.4 -1.6 -13.6 0.2C-12.2 2.2 -10.4 3 -8 2.6Z"/></g></g>
<path d="M823.2 309.4l4.9 4.9l4.9 -4.9" fill="none" stroke="#2f8fd4" stroke-width="1.9"/>
<g transform="translate(899.2 315)" fill="none" stroke="#1a1a1a" stroke-width="1.5" stroke-linejoin="miter"><path d="M-10 -4.8V7.5H5V4.7"/><path d="M3.4 -9.7L9.3 -3.4L3.4 2.8V-0.4C-1.5 -0.4 -4.5 1 -5.9 3.1C-5.5 -2.5 -1.5 -6.2 3.4 -6.5Z"/></g>
<g fill="#1a1a1a"><circle cx="967.5" cy="316" r="1.3"/><circle cx="975.9" cy="316" r="1.3"/><circle cx="984.3" cy="316" r="1.3"/></g>
<g transform="translate(975.3 1056.5)" fill="none" stroke="#1a1a1a" stroke-width="1.5"><path d="M-10.5 10.5L10.5 -10.5M-10.5 3.5V10.5H-3.5M3.5 -10.5H10.5V-3.5"/></g>
<text class="cj" x="306.9" y="406.3" font-size="30.7" fill="#101010">减色法原理</text>
<text class="cj" x="305.5" y="444.5" font-size="30.7" fill="#101010">3原色颜料：</text>
<text class="cj" x="480.4" y="444.5" font-size="30.7" fill="#101010">青（Cyan）</text>
<text class="cj" x="480.4" y="482.8" font-size="30.7" fill="#101010">品（Magenta）</text>
<text class="cj" x="480.4" y="520.9" font-size="30.7" fill="#101010">黄（Yellow）</text>
<circle cx="1043.5" cy="223.3" r="10.7" fill="url(#lg)"/>
<path transform="translate(1043.5 223.3)" fill="#fff" fill-rule="evenodd" d="M-3.6 -4.4H0.4A4.4 4.4 0 0 1 3.4 3L-3.6 4.6ZM0.4 -2.4A1.9 1.9 0 1 0 0.4 1.4A1.9 1.9 0 1 0 0.4 -2.4Z"/>
<text class="cj" x="1064.4" y="229.7" font-size="15.9" fill="#c4c7ce">未命名</text>
<text class="cj" x="1128.8" y="229.7" font-size="15.9" fill="#c4c7ce">未保存</text>
<text class="cj" x="1214.8" y="229.7" font-size="15.9" fill="#c4c7ce">渲染器</text>
<g stroke="#b9bcc3" stroke-width="1.3" fill="none"><path d="M3158.5 227.8h13.5"/><rect x="3211" y="222" width="13" height="13"/><path d="M3263.6 222l13 13m0-13l-13 13"/></g>
<text class="cj" x="1039.7" y="270.7" font-size="15.9" fill="#c0c3ca">文件</text>
<text class="cj" x="1097.4" y="270.7" font-size="15.9" fill="#c0c3ca">编辑</text>
<text class="cj" x="1155.2" y="270.7" font-size="15.9" fill="#c0c3ca">查看</text>
<text class="cj" x="1213" y="270.7" font-size="15.9" fill="#c0c3ca">插入</text>
<text class="cj" x="1270.7" y="270.7" font-size="15.9" fill="#c0c3ca">工具</text>
<text class="cj" x="1329.1" y="270.7" font-size="15.9" fill="#c0c3ca">素材库</text>
<text class="cj" x="1402" y="270.7" font-size="15.9" fill="#c0c3ca">窗口</text>
<text class="cj" x="1460.5" y="270.7" font-size="15.9" fill="#c0c3ca">帮助</text>
<circle cx="3054.5" cy="269.5" r="10.2" fill="none" stroke="#1a6fe0" stroke-width="2"/><circle cx="3054.5" cy="258.5" r="3.6" fill="#1783ff"/>
<text class="cj" x="3075.7" y="274.7" font-size="15.9" fill="#d3d5da">预览</text>
<path d="M3146.8 267.4l5.2 5.2l5.2 -5.2" fill="none" stroke="#c3c6cc" stroke-width="2.0" stroke-linecap="round" stroke-linejoin="round"/>
<g transform="translate(3188.4 269.2)"><circle r="9.6" fill="#cfd1d6"/><path transform="rotate(0)" d="M-1.2 -3.6L4.6 -9.6" stroke="#1e212b" stroke-width="1.9"/><path transform="rotate(60)" d="M-1.2 -3.6L4.6 -9.6" stroke="#1e212b" stroke-width="1.9"/><path transform="rotate(120)" d="M-1.2 -3.6L4.6 -9.6" stroke="#1e212b" stroke-width="1.9"/><path transform="rotate(180)" d="M-1.2 -3.6L4.6 -9.6" stroke="#1e212b" stroke-width="1.9"/><path transform="rotate(240)" d="M-1.2 -3.6L4.6 -9.6" stroke="#1e212b" stroke-width="1.9"/><path transform="rotate(300)" d="M-1.2 -3.6L4.6 -9.6" stroke="#1e212b" stroke-width="1.9"/><circle r="3.1" fill="#1e212b"/></g>
<text class="cj" x="3215" y="274.7" font-size="15.9" fill="#d3d5da">渲染</text>
<path d="M3274 266.4l5.2 5.2l5.2 -5.2" fill="none" stroke="#c3c6cc" stroke-width="2.0" stroke-linecap="round" stroke-linejoin="round"/>
<g transform="translate(3259.5 316)" fill="#cfd1d6"><ellipse cx="-6" cy="4.5" rx="3.3" ry="5.6" transform="rotate(-18 -6 4.5)"/><circle cx="-9.6" cy="-2.6" r="1.2"/><circle cx="-7.2" cy="-3.8" r="1.2"/><circle cx="-4.6" cy="-3.6" r="1.1"/><ellipse cx="5.4" cy="-2.8" rx="3.3" ry="5.6" transform="rotate(14 5.4 -2.8)"/><circle cx="3.2" cy="-10.2" r="1.2"/><circle cx="5.8" cy="-10.8" r="1.2"/><circle cx="8.4" cy="-9.8" r="1.1"/></g>
<g transform="translate(1058.2 317)"><rect x="-11" y="-10.2" width="22" height="20.4" rx="2.6" fill="none" stroke="#d6d8dc" stroke-width="2.6"/><path d="M0 -10.2H8.4A2.6 2.6 0 0 1 11 -7.6V7.6A2.6 2.6 0 0 1 8.4 10.2H0Z" fill="#d6d8dc"/></g>
<g transform="translate(1121.2 317)"><path d="M-9.6 -4.8L-1.4 -11V1.4Z" fill="#d6d8dc"/><path d="M-2 -4.8H3A7.2 7.2 0 0 1 3 9.6H-5.8" fill="none" stroke="#d6d8dc" stroke-width="3.3"/></g>
<g transform="translate(1183.9 317)"><path d="M9.6 -4.8L1.4 -11V1.4Z" fill="#4a4e59"/><path d="M2 -4.8H-3A7.2 7.2 0 0 0 -3 9.6H5.8" fill="none" stroke="#4a4e59" stroke-width="3.3"/></g>
<g transform="translate(1247.6 317)"><circle r="7.6" fill="#d6d8dc"/><circle r="12.6" fill="none" stroke="#d6d8dc" stroke-width="2.6" stroke-dasharray="7.9 5.3" stroke-dashoffset="3.9"/></g>
<g transform="translate(1310.3 317)" fill="#d6d8dc"><circle cx="0" cy="-12.4" r="2.6"/><path d="M-1.4 -7.4L-13 10.8Q0 17 13 10.8L1.4 -7.4Z"/></g>
<rect x="1360.4" y="314.4" width="26" height="5.2" rx="1" fill="#d6d8dc"/>
<rect x="1424.1000000000001" y="305.4" width="25.2" height="23.6" rx="2.6" fill="none" stroke="#d6d8dc" stroke-width="2.6"/>
<g transform="translate(1499.8 317) rotate(45)" fill="#d6d8dc"><rect x="-3.4" y="-14" width="6.8" height="8" rx="2.4"/><rect x="-6.2" y="-7" width="12.4" height="3.6" rx="1"/><path d="M-3.6 -3.4H3.6V8.4L0 13.4L-3.6 8.4Z M-1.4 -1V7.6L0 9.6L1.4 7.6V-1Z" fill-rule="evenodd"/></g>
<g transform="translate(1563.5 317)" fill="#d6d8dc"><rect x="-11.6" y="-12" width="19.6" height="7.6" rx="1.4"/><path d="M8 -9.6H11.2V-0.6H1.2V2.4" fill="none" stroke="#d6d8dc" stroke-width="2.4"/><rect x="-2.4" y="1.6" width="6.4" height="11" rx="1"/></g>
<g transform="translate(1625.8 317)" fill="none" stroke="#4a4e59" stroke-width="2.2" stroke-linejoin="round"><path d="M0 -10.4V2.6M0 2.6L-10.6 8.8M0 2.6L10.6 8.8"/><path d="M-4 -7.2L0 -11.4L4 -7.2M-11.6 3.6L-11.8 9.6L-6 10.6M11.6 3.6L11.8 9.6L6 10.6"/></g>
<g transform="translate(1688.9 317)"><path d="M-13.4 -11.2H13.2V11.6" fill="none" stroke="#4a4e59" stroke-width="2.6" stroke-dasharray="2.7 2.6"/><rect x="-14.7" y="-0.8" width="18.9" height="12.1" fill="#4a4e59"/></g>
<g transform="translate(1058.6000000000001 381.4) scale(0.9)" fill="none" stroke="#d6d8dc" stroke-width="3" stroke-linejoin="round"><path d="M-7.8 12.1A6.8 6.8 0 0 1 -8.6 -1.4A9.4 9.4 0 0 1 10.3 -2.6A7.4 7.4 0 0 1 7.8 12.1Z"/><path d="M-9 -0.8C-5 -4.6 1.4 -4.4 5.4 -0.6"/></g>
<g transform="translate(1058.2 442.8)" fill="#0a7cff" stroke="#1e212b" stroke-width="1.4"><circle cx="-6.3" cy="5.9" r="7.6"/><circle cx="8" cy="6.8" r="6.5"/><circle cx="0" cy="-5.9" r="8.6"/></g>
<g transform="translate(1058.2 505.2)" fill="none" stroke="#d6d8dc" stroke-width="2.4"><rect x="-11.4" y="-6.8" width="16.6" height="13.6"/><path d="M5.2 -2.2L11.6 -5.6V5.6L5.2 2.2M-3.2 -14.4V-6.8M-3.2 6.8V14.4M-3.2 -2.4V2.4"/></g>
<g transform="translate(1058.2 582.2)" fill="none" stroke="#d6d8dc" stroke-width="2.4"><rect x="-12" y="-11.6" width="24" height="23.2" rx="1.6"/><path d="M-6.4 -5.4H6.8M-6.4 0H3.2M-6.4 5.4H6.8"/></g>
<g transform="translate(1116.9 377.1)"><circle r="8.6" fill="none" stroke="#d6d8dc" stroke-width="2.1"/><path d="M0 -5.4A5.4 5.4 0 0 0 0 5.4Z" fill="#d6d8dc"/></g>
<text class="cj" x="1139.4" y="383.9" font-size="18" font-weight="500" fill="#dfe1e5">色调映射</text>
<path d="M1377.9 375.5l5 5l5 -5" fill="none" stroke="#c3c6cc" stroke-width="2.0" stroke-linecap="round" stroke-linejoin="round"/>
<text class="cj" x="1107" y="447" font-size="15.9" fill="#d3d5da">自动曝光</text>
<rect x="1364.8" y="430.8" width="31.3" height="18" rx="9.0" fill="#0b0c10"/>
<circle cx="1374.3" cy="439.8" r="6.6" fill="#393c47"/>
<text class="cj" x="1107" y="494.2" font-size="15.9" fill="#d3d5da">曝光</text>
<path d="M1106.7 527.6H1162.2M1189.2 527.6H1391.2" stroke="#7c808a" stroke-width="2" stroke-linecap="round" fill="none"/>
<circle cx="1175.7" cy="527.6" r="8.3" fill="none" stroke="#b9bcc3" stroke-width="2.3"/>
<text class="cj" x="1107" y="578.7" font-size="15.9" fill="#d3d5da">对比度</text>
<path d="M1106.7 611.9H1235.9M1262.9 611.9H1391.2" stroke="#7c808a" stroke-width="2" stroke-linecap="round" fill="none"/>
<circle cx="1249.4" cy="611.9" r="8.3" fill="none" stroke="#b9bcc3" stroke-width="2.3"/>
<text class="cj" x="1107" y="663.1" font-size="15.9" fill="#d3d5da">高光</text>
<path d="M1106.7 695.8H1182M1209 695.8H1391.2" stroke="#7c808a" stroke-width="2" stroke-linecap="round" fill="none"/>
<circle cx="1195.5" cy="695.8" r="8.3" fill="none" stroke="#b9bcc3" stroke-width="2.3"/>
<text class="cj" x="1107" y="747" font-size="15.9" fill="#d3d5da">阴影</text>
<path d="M1106.7 780.2H1208.3M1235.3 780.2H1391.2" stroke="#7c808a" stroke-width="2" stroke-linecap="round" fill="none"/>
<circle cx="1221.8" cy="780.2" r="8.3" fill="none" stroke="#b9bcc3" stroke-width="2.3"/>
<text class="cj" x="1107" y="830.9" font-size="15.9" fill="#d3d5da">反差</text>
<path d="M1106.7 864.4H1288.4M1315.4 864.4H1391.2" stroke="#7c808a" stroke-width="2" stroke-linecap="round" fill="none"/>
<circle cx="1301.9" cy="864.4" r="8.3" fill="none" stroke="#b9bcc3" stroke-width="2.3"/>
<text class="cj" x="1107" y="925.9" font-size="15.9" fill="#d3d5da">色温</text>
<text class="cj" x="1107" y="1009.8" font-size="15.9" fill="#d3d5da">光晕</text>
<path d="M1130.2 1042.7H1391.2" stroke="#7c808a" stroke-width="2" stroke-linecap="round" fill="none"/>
<circle cx="1116.7" cy="1042.7" r="8.3" fill="none" stroke="#b9bcc3" stroke-width="2.3"/>
<text class="cj" x="1107" y="1093.4" font-size="15.9" fill="#d3d5da">镜头光晕</text>
<path d="M1130.2 1126.9H1391.2" stroke="#7c808a" stroke-width="2" stroke-linecap="round" fill="none"/>
<circle cx="1116.7" cy="1126.9" r="8.3" fill="none" stroke="#b9bcc3" stroke-width="2.3"/>
<text class="cj" x="1107" y="1177.8" font-size="15.9" fill="#d3d5da">饱和度</text>
<path d="M1106.7 1211.3H1257.9M1284.9 1211.3H1391.2" stroke="#7c808a" stroke-width="2" stroke-linecap="round" fill="none"/>
<circle cx="1271.4" cy="1211.3" r="8.3" fill="none" stroke="#b9bcc3" stroke-width="2.3"/>
<rect x="1106.7" y="953.8" width="284.5" height="10" rx="5" fill="url(#ct)"/>
<circle cx="1219.3" cy="958.8" r="9.6" fill="#fff"/>
<rect x="1364.3" y="1240.6" width="31.5" height="18" rx="9.0" fill="#0b0c10"/>
<circle cx="1373.8" cy="1249.6" r="6.6" fill="#393c47"/>
<text class="cj" x="1190.5" y="1303.5" font-size="15.9" fill="#d3d5da">收起选项</text>
<path d="M1266.4 1300.3l4.6 -4.6l4.6 4.6" fill="none" stroke="#c3c6cc" stroke-width="2.0" stroke-linecap="round" stroke-linejoin="round"/>
<path d="M1109.6 1365.6V1378.4A4.2 4.2 0 0 0 1118 1378.4V1370.6A4.2 4.2 0 0 1 1126.4 1370.6V1383.4" fill="none" stroke="#d6d8dc" stroke-width="2.4" stroke-linecap="round"/>
<text class="cj" x="1139.4" y="1381.7" font-size="18" font-weight="500" fill="#dfe1e5">风格化</text>
<path d="M1377.9 1373.5l5 5l5 -5" fill="none" stroke="#c3c6cc" stroke-width="2.0" stroke-linecap="round" stroke-linejoin="round"/>
<text class="cj" x="1121" y="1452.3" font-size="15.9" fill="#d3d5da">白模</text>
<rect x="1210.4" y="1439.4" width="16" height="15.2" rx="2.6" fill="none" stroke="#d6d8dc" stroke-width="2.2"/>
<g transform="translate(1118.4 1523)" fill="#d6d8dc"><circle cx="1" cy="-0.6" r="5"/><path d="M-9.4 2.6H4M-7 6.4H6.4M-4.6 10H2" stroke="#d6d8dc" stroke-width="1.8" fill="none"/><path d="M1 -9.6v2.4M-5.4 -7l1.6 1.7M7.4 -7L5.8 -5.3M-8 -0.6h2M8 -0.6h2" stroke="#d6d8dc" stroke-width="1.8" fill="none"/></g>
<text class="cj" x="1139.4" y="1531.1" font-size="18" font-weight="500" fill="#dfe1e5">天气</text>
<path d="M1377.9 1521.9l5 5l5 -5" fill="none" stroke="#c3c6cc" stroke-width="2.0" stroke-linecap="round" stroke-linejoin="round"/>
<polygon points="1966,736 2390.7,736.8 2390,1242.4 1962,1241.4" fill="#3042d0"/>
<g fill="none" stroke="#d6d8dc" stroke-width="2.2"><path d="M3176.4 887.2h17M3184.9 878.7v17"/></g>
<g transform="translate(3217 887.2)" fill="#d6d8dc"><rect x="-8" y="-8.6" width="13.4" height="5.4" rx="1"/><path d="M5.4 -6.6H8V-0.4H0.8V1.6" fill="none" stroke="#d6d8dc" stroke-width="1.8"/><rect x="-1.6" y="1.2" width="4.4" height="7.6" rx="0.8"/></g>
<g transform="translate(3248.1 887.6)" fill="none" stroke="#d6d8dc" stroke-width="2.2"><path d="M-7.4 0A7.4 7.4 0 1 0 -3.6 -6.4"/><path d="M-8.4 -8.4V-3.2H-3.2" stroke-linejoin="miter"/></g>
<text class="cj" x="2936.5" y="950.5" font-size="15.8" font-weight="500" fill="#e3e5e8">贴图</text>
<text class="cj" x="3061.5" y="950.5" font-size="15.8" font-weight="500" fill="#fff">颜色</text>
<text class="cj" x="2912" y="1024.4" font-size="15.8" fill="#d3d5da">色相</text>
<rect x="2911.3" y="1053" width="327.7" height="10.4" rx="5.2" fill="url(#hue)"/>
<circle cx="3125" cy="1058.2" r="10" fill="#fff"/>
<text class="cj" x="2912" y="1108.4" font-size="15.8" fill="#d3d5da">饱和度</text>
<rect x="2911.3" y="1137" width="327.7" height="10.4" rx="5.2" fill="url(#sat)"/>
<circle cx="3225.8" cy="1142.2" r="12" fill="#fff"/>
<text class="cj" x="2912" y="1193.1" font-size="15.8" fill="#d3d5da">明度</text>
<rect x="2911.3" y="1220.8" width="327.7" height="10.4" rx="5.2" fill="url(#val)"/>
<circle cx="3075.5" cy="1226" r="10" fill="#fff"/>
<path transform="translate(3232.2 1157.6)" d="M0 0V18.8L4.6 14.8L7.9 21.8L10.7 20.5L7.6 13.9H14.4Z" fill="#fff" stroke="#000" stroke-width="1.1" stroke-linejoin="round"/>
<text class="cj" x="2616" y="1709" font-size="100" font-weight="500" fill="#fff">知乎</text>
<text class="cj" x="2856.4" y="1703.7" font-size="94" fill="#fff">@</text>
<text class="cj" x="2951.4" y="1709.4" font-size="94" fill="#fff">想上岸</text>
</svg>
<span class="a t" style="left:147.2px;top:254.1px;font-size:15.5px;line-height:19px;color:#111;font-weight:normal;font-family:'Liberation Sans',sans-serif;">&nbsp;- 2223.jpg</span>
<span class="a t" style="left:1116.5px;top:214.5px;font-size:16px;line-height:19px;color:#c4c7ce;font-weight:normal;font-family:'Liberation Sans',sans-serif;">-</span>
<span class="a t" style="left:1181px;top:214.5px;font-size:16px;line-height:19px;color:#c4c7ce;font-weight:normal;font-family:'Liberation Sans',sans-serif;">-</span>
<span class="a t" style="left:1193.2px;top:214px;font-size:16.6px;line-height:20px;color:#c4c7ce;font-weight:normal;font-family:'Liberation Sans',sans-serif;">D5</span>
<span class="a t" style="left:1518.2px;top:255.5px;font-size:16.2px;line-height:19px;color:#c0c3ca;font-weight:normal;font-family:'Liberation Sans',sans-serif;">NVIDIA DLSS</span>
<span class="a t" style="left:2905.8px;width:600px;text-align:center;top:306.6px;font-size:17px;line-height:20px;color:#fff;font-weight:normal;font-family:'Liberation Sans',sans-serif;">3D</span>
<span class="a t" style="right:1948px;top:478px;font-size:15.6px;line-height:19px;color:#d3d5da;font-weight:normal;font-family:'Liberation Sans',sans-serif;">-0.55<span style="color:#6d717c">EV</span></span>
<span class="a t" style="right:1948px;top:562.5px;font-size:15.6px;line-height:19px;color:#d3d5da;font-weight:normal;font-family:'Liberation Sans',sans-serif;">0</span>
<span class="a t" style="right:1948px;top:646.9px;font-size:15.6px;line-height:19px;color:#d3d5da;font-weight:normal;font-family:'Liberation Sans',sans-serif;">0.3</span>
<span class="a t" style="right:1948px;top:730.8px;font-size:15.6px;line-height:19px;color:#d3d5da;font-weight:normal;font-family:'Liberation Sans',sans-serif;">0.4</span>
<span class="a t" style="right:1948px;top:814.7px;font-size:15.6px;line-height:19px;color:#d3d5da;font-weight:normal;font-family:'Liberation Sans',sans-serif;">0.7</span>
<span class="a t" style="right:1948px;top:909.7px;font-size:15.6px;line-height:19px;color:#d3d5da;font-weight:normal;font-family:'Liberation Sans',sans-serif;">6500<span style="color:#6d717c">K</span></span>
<span class="a t" style="right:1948px;top:993.6px;font-size:15.6px;line-height:19px;color:#d3d5da;font-weight:normal;font-family:'Liberation Sans',sans-serif;">0</span>
<span class="a t" style="right:1948px;top:1077.2px;font-size:15.6px;line-height:19px;color:#d3d5da;font-weight:normal;font-family:'Liberation Sans',sans-serif;">0</span>
<span class="a t" style="right:1948px;top:1161.6px;font-size:15.6px;line-height:19px;color:#d3d5da;font-weight:normal;font-family:'Liberation Sans',sans-serif;">0.17</span>
<span class="a t" style="left:1107px;top:1240.1px;font-size:15.5px;line-height:19px;color:#d3d5da;font-weight:normal;font-family:'Liberation Sans',sans-serif;">LUT</span>
<span class="a t" style="left:2893px;top:877.9px;font-size:16.1px;line-height:19px;color:#d4d6da;font-weight:normal;font-family:'Liberation Sans',sans-serif;">[Color A06]</span>
<span class="a t" style="left:2902.3px;width:600px;text-align:center;top:935.5px;font-size:15.5px;line-height:19px;color:#e3e5e8;font-weight:bold;font-family:'Liberation Sans',sans-serif;">UV</span>
<span class="a t" style="right:100.7px;top:1008.4px;font-size:15.5px;line-height:19px;color:#d3d5da;font-weight:normal;font-family:'Liberation Sans',sans-serif;">240</span>
<span class="a t" style="right:100.7px;top:1092.4px;font-size:15.5px;line-height:19px;color:#d3d5da;font-weight:normal;font-family:'Liberation Sans',sans-serif;">100</span>
<span class="a t" style="right:100.7px;top:1177.1px;font-size:15.5px;line-height:19px;color:#d3d5da;font-weight:normal;font-family:'Liberation Sans',sans-serif;">100</span>
</div></body></html>
